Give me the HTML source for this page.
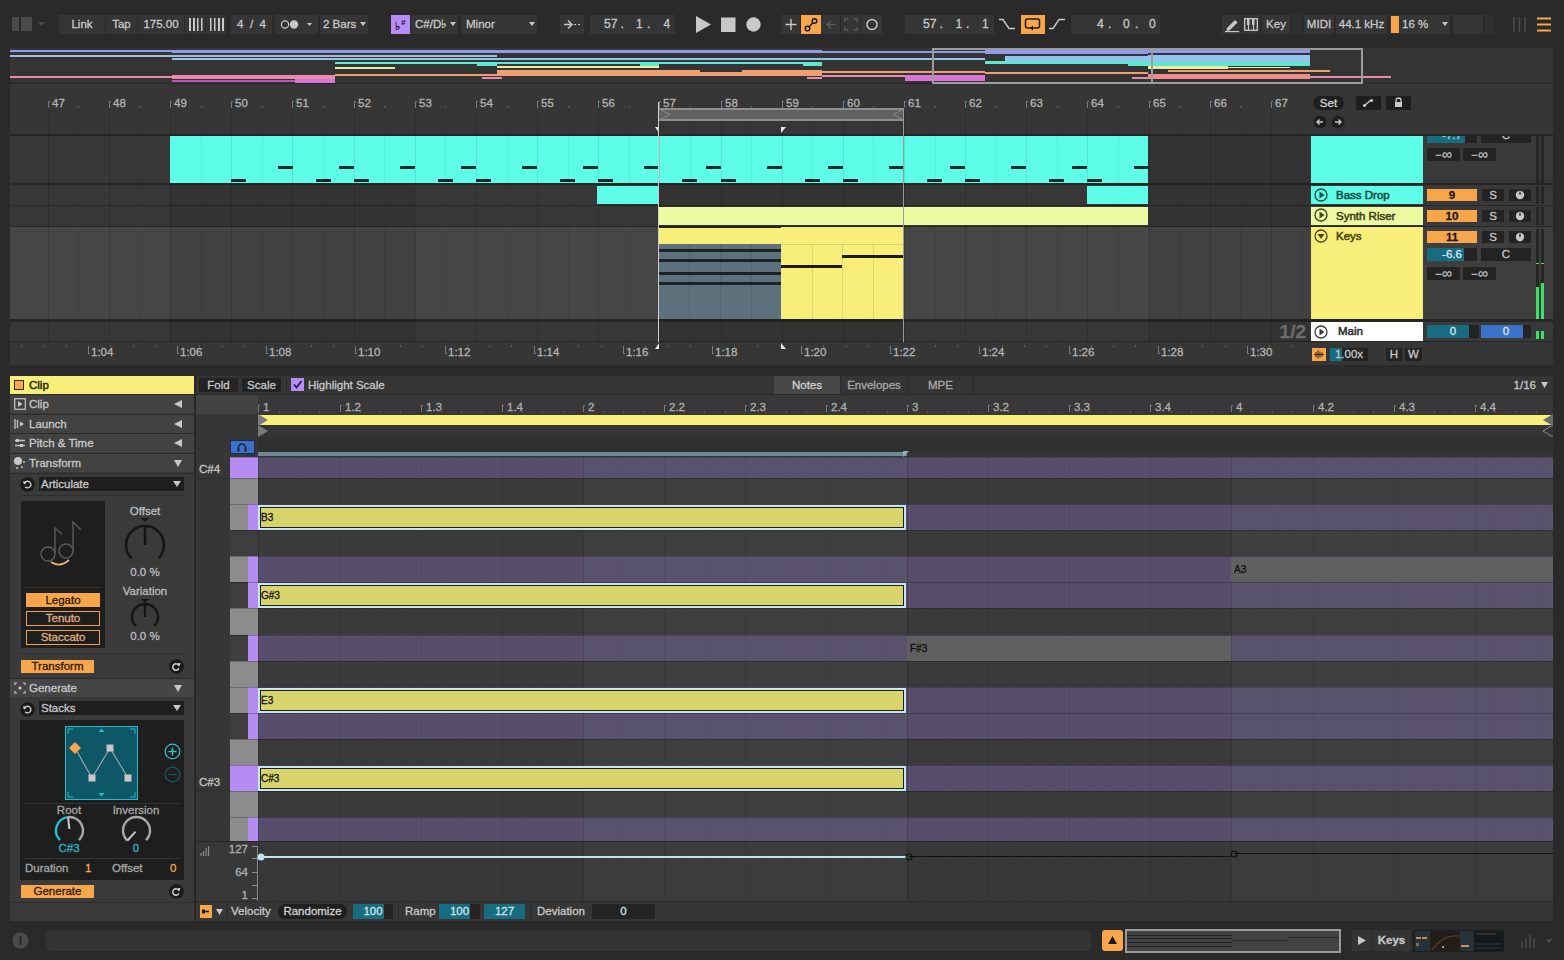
<!DOCTYPE html>
<html><head><meta charset="utf-8"><style>
html,body{margin:0;padding:0;}
body{width:1564px;height:960px;overflow:hidden;background:#2a2a2a;position:relative;font-family:"Liberation Sans",sans-serif;}
.a{position:absolute;}
.t{white-space:nowrap;overflow:visible;-webkit-text-stroke:0.3px currentColor;}
svg.a{overflow:visible;}
</style></head><body>
<svg class="a" style="left:12px;top:16px;" width="36" height="16" viewBox="0 0 36 16"><rect x="0" y="1" width="7" height="14" fill="#4a4a4a"/><rect x="9" y="1" width="11" height="14" fill="#4a4a4a"/><path d="M26 6 L33 6 L29.5 10 Z" fill="#4a4a4a"/></svg>
<div class="a" style="left:59px;top:15px;width:46px;height:19px;background:#353535;"></div>
<div class="a t" style="left:59px;top:15px;width:46px;height:19px;line-height:19px;font-size:11.5px;color:#c9c9c9;text-align:center;font-weight:normal;">Link</div>
<div class="a" style="left:106px;top:15px;width:31px;height:19px;background:#353535;"></div>
<div class="a t" style="left:106px;top:15px;width:31px;height:19px;line-height:19px;font-size:11.5px;color:#c9c9c9;text-align:center;font-weight:normal;">Tap</div>
<div class="a" style="left:138px;top:15px;width:46px;height:19px;background:#353535;"></div>
<div class="a t" style="left:138px;top:15px;width:46px;height:19px;line-height:19px;font-size:11.5px;color:#c9c9c9;text-align:center;font-weight:normal;">175.00</div>
<div class="a" style="left:185px;top:15px;width:20px;height:19px;background:#353535;"></div>
<svg class="a" style="left:188px;top:18px;" width="16" height="13" viewBox="0 0 16 13"><rect x="1" y="0" width="2" height="13" fill="#c8c8c8"/><rect x="5" y="0" width="2" height="13" fill="#c8c8c8"/><rect x="9" y="0" width="1.5" height="13" fill="#c8c8c8"/><rect x="13" y="0" width="1.5" height="13" fill="#c8c8c8"/></svg>
<div class="a" style="left:206px;top:15px;width:20px;height:19px;background:#353535;"></div>
<svg class="a" style="left:209px;top:18px;" width="16" height="13" viewBox="0 0 16 13"><rect x="1" y="0" width="1.5" height="13" fill="#c8c8c8"/><rect x="5" y="0" width="1.5" height="13" fill="#c8c8c8"/><rect x="9" y="0" width="2" height="13" fill="#c8c8c8"/><rect x="13" y="0" width="2" height="13" fill="#c8c8c8"/></svg>
<div class="a" style="left:231px;top:15px;width:41px;height:19px;background:#353535;"></div>
<div class="a t" style="left:231px;top:15px;width:41px;height:19px;line-height:19px;font-size:11.5px;color:#c9c9c9;text-align:center;font-weight:normal;">4&nbsp;&nbsp;/&nbsp;&nbsp;4</div>
<div class="a" style="left:275px;top:15px;width:43px;height:19px;background:#353535;"></div>
<svg class="a" style="left:279px;top:18px;" width="36" height="13" viewBox="0 0 36 13"><circle cx="6" cy="6.5" r="3.6" fill="none" stroke="#c8c8c8" stroke-width="1.2"/><circle cx="15" cy="6.5" r="4.2" fill="#c8c8c8"/><path d="M28 5 L33 5 L30.5 8 Z" fill="#c8c8c8"/></svg>
<div class="a" style="left:320px;top:15px;width:48px;height:19px;background:#353535;"></div>
<div class="a t" style="left:323px;top:15px;width:50px;height:19px;line-height:19px;font-size:11.5px;color:#c9c9c9;text-align:left;font-weight:normal;">2 Bars</div>
<svg class="a" style="left:359px;top:21px;" width="8" height="6" viewBox="0 0 8 6"><path d="M1 1 L7 1 L4 5 Z" fill="#c8c8c8"/></svg>
<div class="a" style="left:391px;top:15px;width:19px;height:19px;background:#b68cf5;"></div>
<svg class="a" style="left:391px;top:15px;" width="19" height="19" viewBox="0 0 19 19"><text x="4" y="15" font-family="Liberation Sans" font-size="11" font-weight="bold" fill="#1e1030">&#9837;</text><text x="10" y="10" font-family="Liberation Sans" font-size="8" font-weight="bold" fill="#1e1030">#</text></svg>
<div class="a" style="left:411px;top:15px;width:47px;height:19px;background:#353535;"></div>
<div class="a t" style="left:415px;top:15px;width:45px;height:19px;line-height:19px;font-size:11.5px;color:#c9c9c9;text-align:left;font-weight:normal;">C#/D&#9837;</div>
<svg class="a" style="left:449px;top:21px;" width="8" height="6" viewBox="0 0 8 6"><path d="M1 1 L7 1 L4 5 Z" fill="#c8c8c8"/></svg>
<div class="a" style="left:461px;top:15px;width:76px;height:19px;background:#353535;"></div>
<div class="a t" style="left:466px;top:15px;width:50px;height:19px;line-height:19px;font-size:11.5px;color:#c9c9c9;text-align:left;font-weight:normal;">Minor</div>
<svg class="a" style="left:528px;top:21px;" width="8" height="6" viewBox="0 0 8 6"><path d="M1 1 L7 1 L4 5 Z" fill="#c8c8c8"/></svg>
<div class="a" style="left:560px;top:15px;width:24px;height:19px;background:#353535;"></div>
<svg class="a" style="left:563px;top:18px;" width="20" height="13" viewBox="0 0 20 13"><path d="M1 6.5 H9 M5 2.5 L9 6.5 L5 10.5" stroke="#c8c8c8" stroke-width="1.5" fill="none"/><path d="M11 6.5 H13 M15 6.5 H17" stroke="#c8c8c8" stroke-width="1.2"/></svg>
<div class="a" style="left:590px;top:15px;width:85px;height:19px;background:#353535;"></div>
<div class="a t" style="left:604px;top:15.84px;width:120px;height:17px;line-height:17px;font-size:12px;color:#c9c9c9;text-align:left;font-weight:normal;">57</div>
<div class="a t" style="left:620.5px;top:15.84px;width:120px;height:17px;line-height:17px;font-size:12px;color:#c9c9c9;text-align:left;font-weight:normal;">.</div>
<div class="a t" style="left:636px;top:15.84px;width:120px;height:17px;line-height:17px;font-size:12px;color:#c9c9c9;text-align:left;font-weight:normal;">1</div>
<div class="a t" style="left:647px;top:15.84px;width:120px;height:17px;line-height:17px;font-size:12px;color:#c9c9c9;text-align:left;font-weight:normal;">.</div>
<div class="a t" style="left:663.5px;top:15.84px;width:120px;height:17px;line-height:17px;font-size:12px;color:#c9c9c9;text-align:left;font-weight:normal;">4</div>
<svg class="a" style="left:695px;top:15px;" width="70" height="19" viewBox="0 0 70 19"><path d="M1 1 L16 9.5 L1 18 Z" fill="#c8c8c8"/><rect x="26" y="2.5" width="14.5" height="14.5" fill="#c8c8c8"/><circle cx="58.5" cy="9.5" r="7.2" fill="#c8c8c8"/></svg>
<div class="a" style="left:781px;top:15px;width:19px;height:19px;background:#353535;"></div>
<svg class="a" style="left:784px;top:18px;" width="14" height="13" viewBox="0 0 14 13"><path d="M7 1 V12 M1.5 6.5 H12.5" stroke="#c8c8c8" stroke-width="1.4"/></svg>
<div class="a" style="left:801px;top:15px;width:20px;height:19px;background:#f8a64c;"></div>
<svg class="a" style="left:804px;top:17px;" width="14" height="15" viewBox="0 0 14 15"><circle cx="3.5" cy="11.5" r="2.3" fill="none" stroke="#1b1b1b" stroke-width="1.4"/><circle cx="10.5" cy="4" r="2.3" fill="none" stroke="#1b1b1b" stroke-width="1.4"/><path d="M5 10 L9 5.5" stroke="#1b1b1b" stroke-width="1.4"/></svg>
<div class="a" style="left:821px;top:15px;width:19px;height:19px;background:#353535;"></div>
<svg class="a" style="left:824px;top:18px;" width="14" height="13" viewBox="0 0 14 13"><path d="M12 6.5 H3 M7 2.5 L3 6.5 L7 10.5" stroke="#5a5a5a" stroke-width="1.4" fill="none"/></svg>
<div class="a" style="left:841px;top:15px;width:19px;height:19px;background:#353535;"></div>
<svg class="a" style="left:844px;top:18px;" width="14" height="13" viewBox="0 0 14 13"><path d="M1 4 V1 H4 M10 1 H13 V4 M13 9 V12 H10 M4 12 H1 V9" stroke="#5a5a5a" stroke-width="1.3" fill="none"/></svg>
<div class="a" style="left:861px;top:15px;width:21px;height:19px;background:#353535;"></div>
<svg class="a" style="left:864px;top:17px;" width="16" height="15" viewBox="0 0 16 15"><circle cx="8" cy="7.5" r="5" fill="none" stroke="#c8c8c8" stroke-width="1.5"/></svg>
<div class="a" style="left:905px;top:15px;width:89px;height:19px;background:#353535;"></div>
<div class="a t" style="left:923px;top:15.84px;width:120px;height:17px;line-height:17px;font-size:12px;color:#c9c9c9;text-align:left;font-weight:normal;">57</div>
<div class="a t" style="left:939.5px;top:15.84px;width:120px;height:17px;line-height:17px;font-size:12px;color:#c9c9c9;text-align:left;font-weight:normal;">.</div>
<div class="a t" style="left:955.5px;top:15.84px;width:120px;height:17px;line-height:17px;font-size:12px;color:#c9c9c9;text-align:left;font-weight:normal;">1</div>
<div class="a t" style="left:966px;top:15.84px;width:120px;height:17px;line-height:17px;font-size:12px;color:#c9c9c9;text-align:left;font-weight:normal;">.</div>
<div class="a t" style="left:982px;top:15.84px;width:120px;height:17px;line-height:17px;font-size:12px;color:#c9c9c9;text-align:left;font-weight:normal;">1</div>
<svg class="a" style="left:998px;top:18px;" width="18" height="13" viewBox="0 0 18 13"><path d="M1 1.5 H5 L11 10.5 H17" stroke="#c8c8c8" stroke-width="1.4" fill="none"/></svg>
<div class="a" style="left:1021px;top:15px;width:24px;height:19px;background:#f8a64c;"></div>
<svg class="a" style="left:1024px;top:17px;" width="18" height="15" viewBox="0 0 18 15"><path d="M7 11 H3.5 Q1.5 11 1.5 9 V4 Q1.5 2 3.5 2 H13.5 Q15.5 2 15.5 4 V9 Q15.5 11 13.5 11 H9" stroke="#1b1b1b" stroke-width="1.5" fill="none"/><path d="M9 8.5 L6 11 L9 13.5 Z" fill="#1b1b1b"/></svg>
<svg class="a" style="left:1048px;top:18px;" width="18" height="13" viewBox="0 0 18 13"><path d="M1 10.5 H5 L11 1.5 H17" stroke="#c8c8c8" stroke-width="1.4" fill="none"/></svg>
<div class="a" style="left:1071px;top:15px;width:89px;height:19px;background:#353535;"></div>
<div class="a t" style="left:1097px;top:15.84px;width:120px;height:17px;line-height:17px;font-size:12px;color:#c9c9c9;text-align:left;font-weight:normal;">4</div>
<div class="a t" style="left:1108px;top:15.84px;width:120px;height:17px;line-height:17px;font-size:12px;color:#c9c9c9;text-align:left;font-weight:normal;">.</div>
<div class="a t" style="left:1123px;top:15.84px;width:120px;height:17px;line-height:17px;font-size:12px;color:#c9c9c9;text-align:left;font-weight:normal;">0</div>
<div class="a t" style="left:1135px;top:15.84px;width:120px;height:17px;line-height:17px;font-size:12px;color:#c9c9c9;text-align:left;font-weight:normal;">.</div>
<div class="a t" style="left:1149px;top:15.84px;width:120px;height:17px;line-height:17px;font-size:12px;color:#c9c9c9;text-align:left;font-weight:normal;">0</div>
<div class="a" style="left:1222px;top:15px;width:19px;height:19px;background:#353535;"></div>
<svg class="a" style="left:1224px;top:18px;" width="16" height="14" viewBox="0 0 16 14"><path d="M3 10 L11 2 L13.5 4.5 L5.5 12.5 L2.5 13 Z" fill="#c8c8c8"/><rect x="1" y="13" width="14" height="1.2" fill="#c8c8c8"/></svg>
<div class="a" style="left:1242px;top:15px;width:18px;height:19px;background:#353535;"></div>
<svg class="a" style="left:1244px;top:18px;" width="14" height="13" viewBox="0 0 14 13"><rect x="0.7" y="0.7" width="12.6" height="11.6" fill="none" stroke="#c8c8c8" stroke-width="1.3"/><path d="M4.5 1 V12 M9.5 1 V12" stroke="#c8c8c8" stroke-width="1.2"/><rect x="3" y="1" width="2.5" height="6" fill="#c8c8c8"/><rect x="8" y="1" width="2.5" height="6" fill="#c8c8c8"/></svg>
<div class="a" style="left:1262px;top:15px;width:28px;height:19px;background:#353535;"></div>
<div class="a t" style="left:1262px;top:15px;width:28px;height:19px;line-height:19px;font-size:11.5px;color:#c9c9c9;text-align:center;font-weight:normal;">Key</div>
<div class="a" style="left:1292px;top:15px;width:10px;height:19px;background:#303030;"></div>
<div class="a" style="left:1304px;top:15px;width:30px;height:19px;background:#353535;"></div>
<div class="a t" style="left:1304px;top:15px;width:30px;height:19px;line-height:19px;font-size:11.5px;color:#c9c9c9;text-align:center;font-weight:normal;">MIDI</div>
<div class="a" style="left:1336px;top:15px;width:51px;height:19px;background:#353535;"></div>
<div class="a t" style="left:1336px;top:15px;width:51px;height:19px;line-height:19px;font-size:11.5px;color:#c9c9c9;text-align:center;font-weight:normal;">44.1 kHz</div>
<div class="a" style="left:1390px;top:15px;width:60px;height:19px;background:#353535;"></div>
<div class="a" style="left:1391px;top:16px;width:8px;height:17px;background:#f8a64c;"></div>
<div class="a t" style="left:1402px;top:15px;width:30px;height:19px;line-height:19px;font-size:11.5px;color:#c9c9c9;text-align:left;font-weight:normal;">16 %</div>
<svg class="a" style="left:1441px;top:21px;" width="8" height="6" viewBox="0 0 8 6"><path d="M1 1 L7 1 L4 5 Z" fill="#c8c8c8"/></svg>
<div class="a" style="left:1453px;top:15px;width:30px;height:19px;background:#353535;"></div>
<div class="a" style="left:1485px;top:15px;width:10px;height:19px;background:#303030;"></div>
<svg class="a" style="left:1512px;top:16px;" width="16" height="17" viewBox="0 0 16 17"><path d="M2 1 V16 M7.5 1 V16 M13 1 V16" stroke="#4a4a4a" stroke-width="1.6"/></svg>
<svg class="a" style="left:1536px;top:16px;" width="16" height="17" viewBox="0 0 16 17"><path d="M1 2.5 H15 M1 8.5 H15 M1 14.5 H15" stroke="#f8a64c" stroke-width="2"/></svg>
<div class="a" style="left:10px;top:48px;width:1543px;height:36px;background:#343434;"></div>
<div class="a" style="left:10px;top:83px;width:1543px;height:1px;background:#262626;"></div>
<div class="a" style="left:10px;top:50px;width:162px;height:2px;background:#8e9ceb;"></div>
<div class="a" style="left:10px;top:55px;width:162px;height:2px;background:#a3bdd6;"></div>
<div class="a" style="left:10px;top:76px;width:162px;height:2px;background:#e98cab;"></div>
<div class="a" style="left:172px;top:50px;width:163px;height:3px;background:#8e9ceb;"></div>
<div class="a" style="left:172px;top:55px;width:163px;height:2px;background:#a3bdd6;"></div>
<div class="a" style="left:172px;top:58px;width:163px;height:2px;background:#92c4ef;"></div>
<div class="a" style="left:172px;top:75px;width:163px;height:4px;background:#e98cab;"></div>
<div class="a" style="left:172px;top:80px;width:123px;height:2px;background:#b058b8;"></div>
<div class="a" style="left:295px;top:79px;width:40px;height:4px;background:#d874d6;"></div>
<div class="a" style="left:335px;top:50px;width:162px;height:3px;background:#8e9ceb;"></div>
<div class="a" style="left:335px;top:55px;width:162px;height:2px;background:#a3bdd6;"></div>
<div class="a" style="left:335px;top:58px;width:162px;height:2px;background:#92c4ef;"></div>
<div class="a" style="left:335px;top:62px;width:162px;height:2px;background:#5ee8cf;"></div>
<div class="a" style="left:477px;top:62px;width:20px;height:4px;background:#5ee8cf;"></div>
<div class="a" style="left:335px;top:67px;width:60px;height:2px;background:#e8eba0;"></div>
<div class="a" style="left:335px;top:74px;width:162px;height:2px;background:#f0a070;"></div>
<div class="a" style="left:482px;top:77px;width:20px;height:2px;background:#e98cab;"></div>
<div class="a" style="left:497px;top:50px;width:162px;height:3px;background:#8e9ceb;"></div>
<div class="a" style="left:497px;top:58px;width:162px;height:2px;background:#92c4ef;"></div>
<div class="a" style="left:497px;top:62px;width:162px;height:2px;background:#5ee8cf;"></div>
<div class="a" style="left:640px;top:62px;width:19px;height:4px;background:#5ee8cf;"></div>
<div class="a" style="left:497px;top:66px;width:162px;height:2px;background:#e8eba0;"></div>
<div class="a" style="left:497px;top:70px;width:162px;height:6px;background:#f0a070;"></div>
<div class="a" style="left:659px;top:50px;width:163px;height:3px;background:#8e9ceb;"></div>
<div class="a" style="left:659px;top:58px;width:163px;height:2px;background:#92c4ef;"></div>
<div class="a" style="left:659px;top:62px;width:163px;height:2px;background:#5ee8cf;"></div>
<div class="a" style="left:803px;top:62px;width:19px;height:4px;background:#5ee8cf;"></div>
<div class="a" style="left:659px;top:70px;width:163px;height:6px;background:#f0a070;"></div>
<div class="a" style="left:700px;top:70px;width:42px;height:2px;background:#343434;"></div>
<div class="a" style="left:807px;top:77px;width:15px;height:2px;background:#e98cab;"></div>
<div class="a" style="left:822px;top:51px;width:163px;height:2px;background:#8e9ceb;"></div>
<div class="a" style="left:822px;top:58px;width:163px;height:2px;background:#92c4ef;"></div>
<div class="a" style="left:822px;top:71px;width:163px;height:2px;background:#f0a070;"></div>
<div class="a" style="left:822px;top:75px;width:163px;height:2px;background:#e98cab;"></div>
<div class="a" style="left:905px;top:75px;width:80px;height:6px;background:#d874d6;"></div>
<div class="a" style="left:985px;top:50px;width:163px;height:4px;background:#8e9ceb;"></div>
<div class="a" style="left:1005px;top:56px;width:143px;height:5px;background:#92c4ef;"></div>
<div class="a" style="left:985px;top:61px;width:163px;height:3px;background:#5ee8cf;"></div>
<div class="a" style="left:1128px;top:62px;width:20px;height:4px;background:#5ee8cf;"></div>
<div class="a" style="left:985px;top:72px;width:163px;height:2px;background:#f0a070;"></div>
<div class="a" style="left:1132px;top:77px;width:16px;height:2px;background:#e98cab;"></div>
<div class="a" style="left:1148px;top:50px;width:162px;height:3px;background:#8e9ceb;"></div>
<div class="a" style="left:1148px;top:55px;width:162px;height:7px;background:#92c4ef;"></div>
<div class="a" style="left:1148px;top:62px;width:162px;height:4px;background:#5ee8cf;"></div>
<div class="a" style="left:1148px;top:66px;width:80px;height:3px;background:#e8eba0;"></div>
<div class="a" style="left:1228px;top:67px;width:62px;height:1px;background:#e8eba0;"></div>
<div class="a" style="left:1168px;top:70px;width:162px;height:2px;background:#f0a070;"></div>
<div class="a" style="left:1148px;top:74px;width:162px;height:5px;background:#ee8c8c;"></div>
<div class="a" style="left:1310px;top:76px;width:81px;height:2px;background:#e98cab;"></div>
<div class="a" style="left:932px;top:48px;width:431px;height:36px;border:2px solid #9c9c9c;box-sizing:border-box;"></div>
<div class="a" style="left:1151px;top:50px;width:2px;height:32px;background:#9c9c9c;"></div>
<div class="a" style="left:10px;top:84px;width:1543px;height:50px;background:#363636;"></div>
<div class="a" style="left:10px;top:134px;width:1300px;height:2px;background:#262626;"></div>
<div class="a" style="left:10px;top:136px;width:1300px;height:47px;background:#373737;"></div>
<div class="a" style="left:10px;top:183px;width:1300px;height:2px;background:#262626;"></div>
<div class="a" style="left:10px;top:185px;width:1300px;height:20px;background:#373737;"></div>
<div class="a" style="left:10px;top:205px;width:1300px;height:1px;background:#262626;"></div>
<div class="a" style="left:10px;top:206px;width:1300px;height:20px;background:#373737;"></div>
<div class="a" style="left:10px;top:226px;width:1300px;height:1px;background:#262626;"></div>
<div class="a" style="left:10px;top:227px;width:1300px;height:92px;background:#464646;"></div>
<div class="a" style="left:10px;top:319px;width:1300px;height:3px;background:#262626;"></div>
<div class="a" style="left:10px;top:322px;width:1300px;height:19px;background:#373737;"></div>
<div class="a" style="left:10px;top:341px;width:1300px;height:1px;background:#262626;"></div>
<div class="a" style="left:10px;top:342px;width:1300px;height:23px;background:#363636;"></div>
<div class="a" style="left:170px;top:136px;width:245px;height:206px;background:rgba(0,0,0,0.07);"></div>
<div class="a" style="left:659px;top:136px;width:245px;height:206px;background:rgba(0,0,0,0.07);"></div>
<div class="a" style="left:1148px;top:136px;width:162px;height:206px;background:rgba(0,0,0,0.07);"></div>
<div class="a" style="left:48px;top:108px;width:1px;height:234px;background:rgba(0,0,0,0.13);"></div>
<div class="a" style="left:78px;top:108px;width:1px;height:234px;background:rgba(0,0,0,0.07);"></div>
<div class="a" style="left:109px;top:108px;width:1px;height:234px;background:rgba(0,0,0,0.13);"></div>
<div class="a" style="left:140px;top:108px;width:1px;height:234px;background:rgba(0,0,0,0.07);"></div>
<div class="a" style="left:170px;top:108px;width:1px;height:234px;background:rgba(0,0,0,0.13);"></div>
<div class="a" style="left:201px;top:108px;width:1px;height:234px;background:rgba(0,0,0,0.07);"></div>
<div class="a" style="left:231px;top:108px;width:1px;height:234px;background:rgba(0,0,0,0.13);"></div>
<div class="a" style="left:262px;top:108px;width:1px;height:234px;background:rgba(0,0,0,0.07);"></div>
<div class="a" style="left:292px;top:108px;width:1px;height:234px;background:rgba(0,0,0,0.13);"></div>
<div class="a" style="left:323px;top:108px;width:1px;height:234px;background:rgba(0,0,0,0.07);"></div>
<div class="a" style="left:354px;top:108px;width:1px;height:234px;background:rgba(0,0,0,0.13);"></div>
<div class="a" style="left:384px;top:108px;width:1px;height:234px;background:rgba(0,0,0,0.07);"></div>
<div class="a" style="left:415px;top:108px;width:1px;height:234px;background:rgba(0,0,0,0.13);"></div>
<div class="a" style="left:445px;top:108px;width:1px;height:234px;background:rgba(0,0,0,0.07);"></div>
<div class="a" style="left:476px;top:108px;width:1px;height:234px;background:rgba(0,0,0,0.13);"></div>
<div class="a" style="left:507px;top:108px;width:1px;height:234px;background:rgba(0,0,0,0.07);"></div>
<div class="a" style="left:537px;top:108px;width:1px;height:234px;background:rgba(0,0,0,0.13);"></div>
<div class="a" style="left:568px;top:108px;width:1px;height:234px;background:rgba(0,0,0,0.07);"></div>
<div class="a" style="left:598px;top:108px;width:1px;height:234px;background:rgba(0,0,0,0.13);"></div>
<div class="a" style="left:629px;top:108px;width:1px;height:234px;background:rgba(0,0,0,0.07);"></div>
<div class="a" style="left:659px;top:108px;width:1px;height:234px;background:rgba(0,0,0,0.13);"></div>
<div class="a" style="left:690px;top:108px;width:1px;height:234px;background:rgba(0,0,0,0.07);"></div>
<div class="a" style="left:721px;top:108px;width:1px;height:234px;background:rgba(0,0,0,0.13);"></div>
<div class="a" style="left:751px;top:108px;width:1px;height:234px;background:rgba(0,0,0,0.07);"></div>
<div class="a" style="left:782px;top:108px;width:1px;height:234px;background:rgba(0,0,0,0.13);"></div>
<div class="a" style="left:812px;top:108px;width:1px;height:234px;background:rgba(0,0,0,0.07);"></div>
<div class="a" style="left:843px;top:108px;width:1px;height:234px;background:rgba(0,0,0,0.13);"></div>
<div class="a" style="left:873px;top:108px;width:1px;height:234px;background:rgba(0,0,0,0.07);"></div>
<div class="a" style="left:904px;top:108px;width:1px;height:234px;background:rgba(0,0,0,0.13);"></div>
<div class="a" style="left:935px;top:108px;width:1px;height:234px;background:rgba(0,0,0,0.07);"></div>
<div class="a" style="left:965px;top:108px;width:1px;height:234px;background:rgba(0,0,0,0.13);"></div>
<div class="a" style="left:996px;top:108px;width:1px;height:234px;background:rgba(0,0,0,0.07);"></div>
<div class="a" style="left:1026px;top:108px;width:1px;height:234px;background:rgba(0,0,0,0.13);"></div>
<div class="a" style="left:1057px;top:108px;width:1px;height:234px;background:rgba(0,0,0,0.07);"></div>
<div class="a" style="left:1087px;top:108px;width:1px;height:234px;background:rgba(0,0,0,0.13);"></div>
<div class="a" style="left:1118px;top:108px;width:1px;height:234px;background:rgba(0,0,0,0.07);"></div>
<div class="a" style="left:1149px;top:108px;width:1px;height:234px;background:rgba(0,0,0,0.13);"></div>
<div class="a" style="left:1179px;top:108px;width:1px;height:234px;background:rgba(0,0,0,0.07);"></div>
<div class="a" style="left:1210px;top:108px;width:1px;height:234px;background:rgba(0,0,0,0.13);"></div>
<div class="a" style="left:1240px;top:108px;width:1px;height:234px;background:rgba(0,0,0,0.07);"></div>
<div class="a" style="left:1271px;top:108px;width:1px;height:234px;background:rgba(0,0,0,0.13);"></div>
<div class="a" style="left:1302px;top:108px;width:1px;height:234px;background:rgba(0,0,0,0.07);"></div>
<div class="a" style="left:48px;top:101px;width:1px;height:7px;background:#7a7a7a;"></div>
<div class="a" style="left:48px;top:101px;width:2px;height:1px;background:#7a7a7a;"></div>
<div class="a t" style="left:52px;top:94.52px;width:120px;height:16px;line-height:16px;font-size:11.5px;color:#b4b4b4;text-align:left;font-weight:normal;">47</div>
<div class="a" style="left:78px;top:106px;width:1px;height:2px;background:#5a5a5a;"></div>
<div class="a" style="left:109px;top:101px;width:1px;height:7px;background:#7a7a7a;"></div>
<div class="a" style="left:109px;top:101px;width:2px;height:1px;background:#7a7a7a;"></div>
<div class="a t" style="left:113px;top:94.52px;width:120px;height:16px;line-height:16px;font-size:11.5px;color:#b4b4b4;text-align:left;font-weight:normal;">48</div>
<div class="a" style="left:140px;top:106px;width:1px;height:2px;background:#5a5a5a;"></div>
<div class="a" style="left:170px;top:101px;width:1px;height:7px;background:#7a7a7a;"></div>
<div class="a" style="left:170px;top:101px;width:2px;height:1px;background:#7a7a7a;"></div>
<div class="a t" style="left:174px;top:94.52px;width:120px;height:16px;line-height:16px;font-size:11.5px;color:#b4b4b4;text-align:left;font-weight:normal;">49</div>
<div class="a" style="left:201px;top:106px;width:1px;height:2px;background:#5a5a5a;"></div>
<div class="a" style="left:231px;top:101px;width:1px;height:7px;background:#7a7a7a;"></div>
<div class="a" style="left:231px;top:101px;width:2px;height:1px;background:#7a7a7a;"></div>
<div class="a t" style="left:235px;top:94.52px;width:120px;height:16px;line-height:16px;font-size:11.5px;color:#b4b4b4;text-align:left;font-weight:normal;">50</div>
<div class="a" style="left:262px;top:106px;width:1px;height:2px;background:#5a5a5a;"></div>
<div class="a" style="left:292px;top:101px;width:1px;height:7px;background:#7a7a7a;"></div>
<div class="a" style="left:292px;top:101px;width:2px;height:1px;background:#7a7a7a;"></div>
<div class="a t" style="left:296px;top:94.52px;width:120px;height:16px;line-height:16px;font-size:11.5px;color:#b4b4b4;text-align:left;font-weight:normal;">51</div>
<div class="a" style="left:323px;top:106px;width:1px;height:2px;background:#5a5a5a;"></div>
<div class="a" style="left:354px;top:101px;width:1px;height:7px;background:#7a7a7a;"></div>
<div class="a" style="left:354px;top:101px;width:2px;height:1px;background:#7a7a7a;"></div>
<div class="a t" style="left:358px;top:94.52px;width:120px;height:16px;line-height:16px;font-size:11.5px;color:#b4b4b4;text-align:left;font-weight:normal;">52</div>
<div class="a" style="left:384px;top:106px;width:1px;height:2px;background:#5a5a5a;"></div>
<div class="a" style="left:415px;top:101px;width:1px;height:7px;background:#7a7a7a;"></div>
<div class="a" style="left:415px;top:101px;width:2px;height:1px;background:#7a7a7a;"></div>
<div class="a t" style="left:419px;top:94.52px;width:120px;height:16px;line-height:16px;font-size:11.5px;color:#b4b4b4;text-align:left;font-weight:normal;">53</div>
<div class="a" style="left:445px;top:106px;width:1px;height:2px;background:#5a5a5a;"></div>
<div class="a" style="left:476px;top:101px;width:1px;height:7px;background:#7a7a7a;"></div>
<div class="a" style="left:476px;top:101px;width:2px;height:1px;background:#7a7a7a;"></div>
<div class="a t" style="left:480px;top:94.52px;width:120px;height:16px;line-height:16px;font-size:11.5px;color:#b4b4b4;text-align:left;font-weight:normal;">54</div>
<div class="a" style="left:507px;top:106px;width:1px;height:2px;background:#5a5a5a;"></div>
<div class="a" style="left:537px;top:101px;width:1px;height:7px;background:#7a7a7a;"></div>
<div class="a" style="left:537px;top:101px;width:2px;height:1px;background:#7a7a7a;"></div>
<div class="a t" style="left:541px;top:94.52px;width:120px;height:16px;line-height:16px;font-size:11.5px;color:#b4b4b4;text-align:left;font-weight:normal;">55</div>
<div class="a" style="left:568px;top:106px;width:1px;height:2px;background:#5a5a5a;"></div>
<div class="a" style="left:598px;top:101px;width:1px;height:7px;background:#7a7a7a;"></div>
<div class="a" style="left:598px;top:101px;width:2px;height:1px;background:#7a7a7a;"></div>
<div class="a t" style="left:602px;top:94.52px;width:120px;height:16px;line-height:16px;font-size:11.5px;color:#b4b4b4;text-align:left;font-weight:normal;">56</div>
<div class="a" style="left:629px;top:106px;width:1px;height:2px;background:#5a5a5a;"></div>
<div class="a" style="left:659px;top:101px;width:1px;height:7px;background:#7a7a7a;"></div>
<div class="a" style="left:659px;top:101px;width:2px;height:1px;background:#7a7a7a;"></div>
<div class="a t" style="left:663px;top:94.52px;width:120px;height:16px;line-height:16px;font-size:11.5px;color:#b4b4b4;text-align:left;font-weight:normal;">57</div>
<div class="a" style="left:690px;top:106px;width:1px;height:2px;background:#5a5a5a;"></div>
<div class="a" style="left:721px;top:101px;width:1px;height:7px;background:#7a7a7a;"></div>
<div class="a" style="left:721px;top:101px;width:2px;height:1px;background:#7a7a7a;"></div>
<div class="a t" style="left:725px;top:94.52px;width:120px;height:16px;line-height:16px;font-size:11.5px;color:#b4b4b4;text-align:left;font-weight:normal;">58</div>
<div class="a" style="left:751px;top:106px;width:1px;height:2px;background:#5a5a5a;"></div>
<div class="a" style="left:782px;top:101px;width:1px;height:7px;background:#7a7a7a;"></div>
<div class="a" style="left:782px;top:101px;width:2px;height:1px;background:#7a7a7a;"></div>
<div class="a t" style="left:786px;top:94.52px;width:120px;height:16px;line-height:16px;font-size:11.5px;color:#b4b4b4;text-align:left;font-weight:normal;">59</div>
<div class="a" style="left:812px;top:106px;width:1px;height:2px;background:#5a5a5a;"></div>
<div class="a" style="left:843px;top:101px;width:1px;height:7px;background:#7a7a7a;"></div>
<div class="a" style="left:843px;top:101px;width:2px;height:1px;background:#7a7a7a;"></div>
<div class="a t" style="left:847px;top:94.52px;width:120px;height:16px;line-height:16px;font-size:11.5px;color:#b4b4b4;text-align:left;font-weight:normal;">60</div>
<div class="a" style="left:873px;top:106px;width:1px;height:2px;background:#5a5a5a;"></div>
<div class="a" style="left:904px;top:101px;width:1px;height:7px;background:#7a7a7a;"></div>
<div class="a" style="left:904px;top:101px;width:2px;height:1px;background:#7a7a7a;"></div>
<div class="a t" style="left:908px;top:94.52px;width:120px;height:16px;line-height:16px;font-size:11.5px;color:#b4b4b4;text-align:left;font-weight:normal;">61</div>
<div class="a" style="left:935px;top:106px;width:1px;height:2px;background:#5a5a5a;"></div>
<div class="a" style="left:965px;top:101px;width:1px;height:7px;background:#7a7a7a;"></div>
<div class="a" style="left:965px;top:101px;width:2px;height:1px;background:#7a7a7a;"></div>
<div class="a t" style="left:969px;top:94.52px;width:120px;height:16px;line-height:16px;font-size:11.5px;color:#b4b4b4;text-align:left;font-weight:normal;">62</div>
<div class="a" style="left:996px;top:106px;width:1px;height:2px;background:#5a5a5a;"></div>
<div class="a" style="left:1026px;top:101px;width:1px;height:7px;background:#7a7a7a;"></div>
<div class="a" style="left:1026px;top:101px;width:2px;height:1px;background:#7a7a7a;"></div>
<div class="a t" style="left:1030px;top:94.52px;width:120px;height:16px;line-height:16px;font-size:11.5px;color:#b4b4b4;text-align:left;font-weight:normal;">63</div>
<div class="a" style="left:1057px;top:106px;width:1px;height:2px;background:#5a5a5a;"></div>
<div class="a" style="left:1087px;top:101px;width:1px;height:7px;background:#7a7a7a;"></div>
<div class="a" style="left:1087px;top:101px;width:2px;height:1px;background:#7a7a7a;"></div>
<div class="a t" style="left:1091px;top:94.52px;width:120px;height:16px;line-height:16px;font-size:11.5px;color:#b4b4b4;text-align:left;font-weight:normal;">64</div>
<div class="a" style="left:1118px;top:106px;width:1px;height:2px;background:#5a5a5a;"></div>
<div class="a" style="left:1149px;top:101px;width:1px;height:7px;background:#7a7a7a;"></div>
<div class="a" style="left:1149px;top:101px;width:2px;height:1px;background:#7a7a7a;"></div>
<div class="a t" style="left:1153px;top:94.52px;width:120px;height:16px;line-height:16px;font-size:11.5px;color:#b4b4b4;text-align:left;font-weight:normal;">65</div>
<div class="a" style="left:1179px;top:106px;width:1px;height:2px;background:#5a5a5a;"></div>
<div class="a" style="left:1210px;top:101px;width:1px;height:7px;background:#7a7a7a;"></div>
<div class="a" style="left:1210px;top:101px;width:2px;height:1px;background:#7a7a7a;"></div>
<div class="a t" style="left:1214px;top:94.52px;width:120px;height:16px;line-height:16px;font-size:11.5px;color:#b4b4b4;text-align:left;font-weight:normal;">66</div>
<div class="a" style="left:1240px;top:106px;width:1px;height:2px;background:#5a5a5a;"></div>
<div class="a" style="left:1271px;top:101px;width:1px;height:7px;background:#7a7a7a;"></div>
<div class="a" style="left:1271px;top:101px;width:2px;height:1px;background:#7a7a7a;"></div>
<div class="a t" style="left:1275px;top:94.52px;width:120px;height:16px;line-height:16px;font-size:11.5px;color:#b4b4b4;text-align:left;font-weight:normal;">67</div>
<div class="a" style="left:659px;top:108px;width:244px;height:13px;background:#616161;border-top:2px solid #8e8e8e;border-bottom:2px solid #8e8e8e;box-sizing:border-box;"></div>
<svg class="a" style="left:660px;top:109px;" width="14" height="11" viewBox="0 0 14 11"><path d="M1 1 L10 5.5 L1 10" stroke="#8c8c8c" stroke-width="1" fill="none"/></svg>
<svg class="a" style="left:889px;top:109px;" width="14" height="11" viewBox="0 0 14 11"><path d="M13 1 L4 5.5 L13 10" stroke="#8c8c8c" stroke-width="1" fill="none"/></svg>
<div class="a" style="left:170px;top:136px;width:978px;height:47px;background:#5efde8;"></div>
<div class="a" style="left:201px;top:136px;width:1px;height:47px;background:rgba(0,60,60,0.07);"></div>
<div class="a" style="left:231px;top:136px;width:1px;height:47px;background:rgba(0,60,60,0.12);"></div>
<div class="a" style="left:262px;top:136px;width:1px;height:47px;background:rgba(0,60,60,0.07);"></div>
<div class="a" style="left:292px;top:136px;width:1px;height:47px;background:rgba(0,60,60,0.12);"></div>
<div class="a" style="left:323px;top:136px;width:1px;height:47px;background:rgba(0,60,60,0.07);"></div>
<div class="a" style="left:354px;top:136px;width:1px;height:47px;background:rgba(0,60,60,0.12);"></div>
<div class="a" style="left:384px;top:136px;width:1px;height:47px;background:rgba(0,60,60,0.07);"></div>
<div class="a" style="left:415px;top:136px;width:1px;height:47px;background:rgba(0,60,60,0.12);"></div>
<div class="a" style="left:445px;top:136px;width:1px;height:47px;background:rgba(0,60,60,0.07);"></div>
<div class="a" style="left:476px;top:136px;width:1px;height:47px;background:rgba(0,60,60,0.12);"></div>
<div class="a" style="left:507px;top:136px;width:1px;height:47px;background:rgba(0,60,60,0.07);"></div>
<div class="a" style="left:537px;top:136px;width:1px;height:47px;background:rgba(0,60,60,0.12);"></div>
<div class="a" style="left:568px;top:136px;width:1px;height:47px;background:rgba(0,60,60,0.07);"></div>
<div class="a" style="left:598px;top:136px;width:1px;height:47px;background:rgba(0,60,60,0.12);"></div>
<div class="a" style="left:629px;top:136px;width:1px;height:47px;background:rgba(0,60,60,0.07);"></div>
<div class="a" style="left:659px;top:136px;width:1px;height:47px;background:rgba(0,60,60,0.12);"></div>
<div class="a" style="left:690px;top:136px;width:1px;height:47px;background:rgba(0,60,60,0.07);"></div>
<div class="a" style="left:721px;top:136px;width:1px;height:47px;background:rgba(0,60,60,0.12);"></div>
<div class="a" style="left:751px;top:136px;width:1px;height:47px;background:rgba(0,60,60,0.07);"></div>
<div class="a" style="left:782px;top:136px;width:1px;height:47px;background:rgba(0,60,60,0.12);"></div>
<div class="a" style="left:812px;top:136px;width:1px;height:47px;background:rgba(0,60,60,0.07);"></div>
<div class="a" style="left:843px;top:136px;width:1px;height:47px;background:rgba(0,60,60,0.12);"></div>
<div class="a" style="left:873px;top:136px;width:1px;height:47px;background:rgba(0,60,60,0.07);"></div>
<div class="a" style="left:904px;top:136px;width:1px;height:47px;background:rgba(0,60,60,0.12);"></div>
<div class="a" style="left:935px;top:136px;width:1px;height:47px;background:rgba(0,60,60,0.07);"></div>
<div class="a" style="left:965px;top:136px;width:1px;height:47px;background:rgba(0,60,60,0.12);"></div>
<div class="a" style="left:996px;top:136px;width:1px;height:47px;background:rgba(0,60,60,0.07);"></div>
<div class="a" style="left:1026px;top:136px;width:1px;height:47px;background:rgba(0,60,60,0.12);"></div>
<div class="a" style="left:1057px;top:136px;width:1px;height:47px;background:rgba(0,60,60,0.07);"></div>
<div class="a" style="left:1087px;top:136px;width:1px;height:47px;background:rgba(0,60,60,0.12);"></div>
<div class="a" style="left:1118px;top:136px;width:1px;height:47px;background:rgba(0,60,60,0.07);"></div>
<div class="a" style="left:278px;top:166px;width:15px;height:3px;background:#0e2b2b;"></div>
<div class="a" style="left:231px;top:179px;width:15px;height:3px;background:#0e2b2b;"></div>
<div class="a" style="left:339px;top:166px;width:15px;height:3px;background:#0e2b2b;"></div>
<div class="a" style="left:316px;top:179px;width:15px;height:3px;background:#0e2b2b;"></div>
<div class="a" style="left:400px;top:166px;width:15px;height:3px;background:#0e2b2b;"></div>
<div class="a" style="left:354px;top:179px;width:15px;height:3px;background:#0e2b2b;"></div>
<div class="a" style="left:461px;top:166px;width:15px;height:3px;background:#0e2b2b;"></div>
<div class="a" style="left:438px;top:179px;width:15px;height:3px;background:#0e2b2b;"></div>
<div class="a" style="left:522px;top:166px;width:15px;height:3px;background:#0e2b2b;"></div>
<div class="a" style="left:476px;top:179px;width:15px;height:3px;background:#0e2b2b;"></div>
<div class="a" style="left:583px;top:166px;width:15px;height:3px;background:#0e2b2b;"></div>
<div class="a" style="left:560px;top:179px;width:15px;height:3px;background:#0e2b2b;"></div>
<div class="a" style="left:644px;top:166px;width:15px;height:3px;background:#0e2b2b;"></div>
<div class="a" style="left:598px;top:179px;width:15px;height:3px;background:#0e2b2b;"></div>
<div class="a" style="left:706px;top:166px;width:15px;height:3px;background:#0e2b2b;"></div>
<div class="a" style="left:682px;top:179px;width:15px;height:3px;background:#0e2b2b;"></div>
<div class="a" style="left:767px;top:166px;width:15px;height:3px;background:#0e2b2b;"></div>
<div class="a" style="left:721px;top:179px;width:15px;height:3px;background:#0e2b2b;"></div>
<div class="a" style="left:828px;top:166px;width:15px;height:3px;background:#0e2b2b;"></div>
<div class="a" style="left:805px;top:179px;width:15px;height:3px;background:#0e2b2b;"></div>
<div class="a" style="left:889px;top:166px;width:15px;height:3px;background:#0e2b2b;"></div>
<div class="a" style="left:843px;top:179px;width:15px;height:3px;background:#0e2b2b;"></div>
<div class="a" style="left:950px;top:166px;width:15px;height:3px;background:#0e2b2b;"></div>
<div class="a" style="left:927px;top:179px;width:15px;height:3px;background:#0e2b2b;"></div>
<div class="a" style="left:1011px;top:166px;width:15px;height:3px;background:#0e2b2b;"></div>
<div class="a" style="left:965px;top:179px;width:15px;height:3px;background:#0e2b2b;"></div>
<div class="a" style="left:1072px;top:166px;width:15px;height:3px;background:#0e2b2b;"></div>
<div class="a" style="left:1049px;top:179px;width:15px;height:3px;background:#0e2b2b;"></div>
<div class="a" style="left:1134px;top:166px;width:15px;height:3px;background:#0e2b2b;"></div>
<div class="a" style="left:1087px;top:179px;width:15px;height:3px;background:#0e2b2b;"></div>
<div class="a" style="left:597px;top:186px;width:61px;height:18px;background:#5efde8;"></div>
<div class="a" style="left:1087px;top:186px;width:61px;height:18px;background:#5efde8;"></div>
<div class="a" style="left:659px;top:207px;width:489px;height:18px;background:#eefaa2;"></div>
<div class="a" style="left:658px;top:227px;width:245px;height:17px;background:#f8ef7b;"></div>
<div class="a" style="left:658px;top:227px;width:123px;height:1px;background:#262626;"></div>
<div class="a" style="left:659px;top:244px;width:122px;height:75px;background:#5d727d;"></div>
<div class="a" style="left:781px;top:244px;width:122px;height:75px;background:#f8ef7b;"></div>
<div class="a" style="left:781px;top:244px;width:122px;height:1px;background:rgba(0,0,0,0.12);"></div>
<div class="a" style="left:689px;top:244px;width:1px;height:75px;background:rgba(0,0,0,0.10);"></div>
<div class="a" style="left:720px;top:244px;width:1px;height:75px;background:rgba(0,0,0,0.10);"></div>
<div class="a" style="left:751px;top:244px;width:1px;height:75px;background:rgba(0,0,0,0.10);"></div>
<div class="a" style="left:812px;top:244px;width:1px;height:75px;background:rgba(0,0,0,0.10);"></div>
<div class="a" style="left:842px;top:244px;width:1px;height:75px;background:rgba(0,0,0,0.10);"></div>
<div class="a" style="left:873px;top:244px;width:1px;height:75px;background:rgba(0,0,0,0.10);"></div>
<div class="a" style="left:659px;top:249px;width:122px;height:3px;background:#1c2226;"></div>
<div class="a" style="left:659px;top:259px;width:122px;height:3px;background:#1c2226;"></div>
<div class="a" style="left:659px;top:272px;width:122px;height:3px;background:#1c2226;"></div>
<div class="a" style="left:659px;top:282px;width:122px;height:3px;background:#1c2226;"></div>
<div class="a" style="left:781px;top:265px;width:61px;height:3px;background:#1c1c10;"></div>
<div class="a" style="left:842px;top:255px;width:61px;height:3px;background:#1c1c10;"></div>
<svg class="a" style="left:655px;top:127px;" width="5" height="6" viewBox="0 0 5 6"><path d="M0 0 L4 0 L4 6 Z" fill="#e8e8e8"/></svg>
<svg class="a" style="left:781px;top:127px;" width="5" height="6" viewBox="0 0 5 6"><path d="M0 0 L5 0 L0 6 Z" fill="#e8e8e8"/></svg>
<svg class="a" style="left:655px;top:343px;" width="5" height="6" viewBox="0 0 5 6"><path d="M4 0 L4 6 L0 6 Z" fill="#e8e8e8"/></svg>
<svg class="a" style="left:781px;top:343px;" width="5" height="6" viewBox="0 0 5 6"><path d="M0 0 L5 6 L0 6 Z" fill="#e8e8e8"/></svg>
<div class="a" style="left:658px;top:102px;width:1px;height:240px;background:#cfcfcf;"></div>
<div class="a" style="left:903px;top:108px;width:1px;height:234px;background:#9a9a9a;"></div>
<div class="a" style="left:88px;top:346px;width:1px;height:8px;background:#7a7a7a;"></div>
<div class="a" style="left:88px;top:353px;width:2px;height:1px;background:#7a7a7a;"></div>
<div class="a t" style="left:91px;top:343.52px;width:120px;height:16px;line-height:16px;font-size:11.5px;color:#b4b4b4;text-align:left;font-weight:normal;">1:04</div>
<div class="a" style="left:21px;top:345px;width:1px;height:2px;background:#5e5e5e;"></div>
<div class="a" style="left:43px;top:345px;width:1px;height:2px;background:#5e5e5e;"></div>
<div class="a" style="left:66px;top:345px;width:1px;height:2px;background:#5e5e5e;"></div>
<div class="a" style="left:177px;top:346px;width:1px;height:8px;background:#7a7a7a;"></div>
<div class="a" style="left:177px;top:353px;width:2px;height:1px;background:#7a7a7a;"></div>
<div class="a t" style="left:180px;top:343.52px;width:120px;height:16px;line-height:16px;font-size:11.5px;color:#b4b4b4;text-align:left;font-weight:normal;">1:06</div>
<div class="a" style="left:110px;top:345px;width:1px;height:2px;background:#5e5e5e;"></div>
<div class="a" style="left:133px;top:345px;width:1px;height:2px;background:#5e5e5e;"></div>
<div class="a" style="left:155px;top:345px;width:1px;height:2px;background:#5e5e5e;"></div>
<div class="a" style="left:266px;top:346px;width:1px;height:8px;background:#7a7a7a;"></div>
<div class="a" style="left:266px;top:353px;width:2px;height:1px;background:#7a7a7a;"></div>
<div class="a t" style="left:269px;top:343.52px;width:120px;height:16px;line-height:16px;font-size:11.5px;color:#b4b4b4;text-align:left;font-weight:normal;">1:08</div>
<div class="a" style="left:199px;top:345px;width:1px;height:2px;background:#5e5e5e;"></div>
<div class="a" style="left:222px;top:345px;width:1px;height:2px;background:#5e5e5e;"></div>
<div class="a" style="left:244px;top:345px;width:1px;height:2px;background:#5e5e5e;"></div>
<div class="a" style="left:355px;top:346px;width:1px;height:8px;background:#7a7a7a;"></div>
<div class="a" style="left:355px;top:353px;width:2px;height:1px;background:#7a7a7a;"></div>
<div class="a t" style="left:358px;top:343.52px;width:120px;height:16px;line-height:16px;font-size:11.5px;color:#b4b4b4;text-align:left;font-weight:normal;">1:10</div>
<div class="a" style="left:289px;top:345px;width:1px;height:2px;background:#5e5e5e;"></div>
<div class="a" style="left:311px;top:345px;width:1px;height:2px;background:#5e5e5e;"></div>
<div class="a" style="left:333px;top:345px;width:1px;height:2px;background:#5e5e5e;"></div>
<div class="a" style="left:445px;top:346px;width:1px;height:8px;background:#7a7a7a;"></div>
<div class="a" style="left:445px;top:353px;width:2px;height:1px;background:#7a7a7a;"></div>
<div class="a t" style="left:448px;top:343.52px;width:120px;height:16px;line-height:16px;font-size:11.5px;color:#b4b4b4;text-align:left;font-weight:normal;">1:12</div>
<div class="a" style="left:378px;top:345px;width:1px;height:2px;background:#5e5e5e;"></div>
<div class="a" style="left:400px;top:345px;width:1px;height:2px;background:#5e5e5e;"></div>
<div class="a" style="left:422px;top:345px;width:1px;height:2px;background:#5e5e5e;"></div>
<div class="a" style="left:534px;top:346px;width:1px;height:8px;background:#7a7a7a;"></div>
<div class="a" style="left:534px;top:353px;width:2px;height:1px;background:#7a7a7a;"></div>
<div class="a t" style="left:537px;top:343.52px;width:120px;height:16px;line-height:16px;font-size:11.5px;color:#b4b4b4;text-align:left;font-weight:normal;">1:14</div>
<div class="a" style="left:467px;top:345px;width:1px;height:2px;background:#5e5e5e;"></div>
<div class="a" style="left:489px;top:345px;width:1px;height:2px;background:#5e5e5e;"></div>
<div class="a" style="left:511px;top:345px;width:1px;height:2px;background:#5e5e5e;"></div>
<div class="a" style="left:623px;top:346px;width:1px;height:8px;background:#7a7a7a;"></div>
<div class="a" style="left:623px;top:353px;width:2px;height:1px;background:#7a7a7a;"></div>
<div class="a t" style="left:626px;top:343.52px;width:120px;height:16px;line-height:16px;font-size:11.5px;color:#b4b4b4;text-align:left;font-weight:normal;">1:16</div>
<div class="a" style="left:556px;top:345px;width:1px;height:2px;background:#5e5e5e;"></div>
<div class="a" style="left:578px;top:345px;width:1px;height:2px;background:#5e5e5e;"></div>
<div class="a" style="left:601px;top:345px;width:1px;height:2px;background:#5e5e5e;"></div>
<div class="a" style="left:712px;top:346px;width:1px;height:8px;background:#7a7a7a;"></div>
<div class="a" style="left:712px;top:353px;width:2px;height:1px;background:#7a7a7a;"></div>
<div class="a t" style="left:715px;top:343.52px;width:120px;height:16px;line-height:16px;font-size:11.5px;color:#b4b4b4;text-align:left;font-weight:normal;">1:18</div>
<div class="a" style="left:645px;top:345px;width:1px;height:2px;background:#5e5e5e;"></div>
<div class="a" style="left:667px;top:345px;width:1px;height:2px;background:#5e5e5e;"></div>
<div class="a" style="left:690px;top:345px;width:1px;height:2px;background:#5e5e5e;"></div>
<div class="a" style="left:801px;top:346px;width:1px;height:8px;background:#7a7a7a;"></div>
<div class="a" style="left:801px;top:353px;width:2px;height:1px;background:#7a7a7a;"></div>
<div class="a t" style="left:804px;top:343.52px;width:120px;height:16px;line-height:16px;font-size:11.5px;color:#b4b4b4;text-align:left;font-weight:normal;">1:20</div>
<div class="a" style="left:734px;top:345px;width:1px;height:2px;background:#5e5e5e;"></div>
<div class="a" style="left:757px;top:345px;width:1px;height:2px;background:#5e5e5e;"></div>
<div class="a" style="left:779px;top:345px;width:1px;height:2px;background:#5e5e5e;"></div>
<div class="a" style="left:890px;top:346px;width:1px;height:8px;background:#7a7a7a;"></div>
<div class="a" style="left:890px;top:353px;width:2px;height:1px;background:#7a7a7a;"></div>
<div class="a t" style="left:893px;top:343.52px;width:120px;height:16px;line-height:16px;font-size:11.5px;color:#b4b4b4;text-align:left;font-weight:normal;">1:22</div>
<div class="a" style="left:823px;top:345px;width:1px;height:2px;background:#5e5e5e;"></div>
<div class="a" style="left:846px;top:345px;width:1px;height:2px;background:#5e5e5e;"></div>
<div class="a" style="left:868px;top:345px;width:1px;height:2px;background:#5e5e5e;"></div>
<div class="a" style="left:979px;top:346px;width:1px;height:8px;background:#7a7a7a;"></div>
<div class="a" style="left:979px;top:353px;width:2px;height:1px;background:#7a7a7a;"></div>
<div class="a t" style="left:982px;top:343.52px;width:120px;height:16px;line-height:16px;font-size:11.5px;color:#b4b4b4;text-align:left;font-weight:normal;">1:24</div>
<div class="a" style="left:913px;top:345px;width:1px;height:2px;background:#5e5e5e;"></div>
<div class="a" style="left:935px;top:345px;width:1px;height:2px;background:#5e5e5e;"></div>
<div class="a" style="left:957px;top:345px;width:1px;height:2px;background:#5e5e5e;"></div>
<div class="a" style="left:1069px;top:346px;width:1px;height:8px;background:#7a7a7a;"></div>
<div class="a" style="left:1069px;top:353px;width:2px;height:1px;background:#7a7a7a;"></div>
<div class="a t" style="left:1072px;top:343.52px;width:120px;height:16px;line-height:16px;font-size:11.5px;color:#b4b4b4;text-align:left;font-weight:normal;">1:26</div>
<div class="a" style="left:1002px;top:345px;width:1px;height:2px;background:#5e5e5e;"></div>
<div class="a" style="left:1024px;top:345px;width:1px;height:2px;background:#5e5e5e;"></div>
<div class="a" style="left:1046px;top:345px;width:1px;height:2px;background:#5e5e5e;"></div>
<div class="a" style="left:1158px;top:346px;width:1px;height:8px;background:#7a7a7a;"></div>
<div class="a" style="left:1158px;top:353px;width:2px;height:1px;background:#7a7a7a;"></div>
<div class="a t" style="left:1161px;top:343.52px;width:120px;height:16px;line-height:16px;font-size:11.5px;color:#b4b4b4;text-align:left;font-weight:normal;">1:28</div>
<div class="a" style="left:1091px;top:345px;width:1px;height:2px;background:#5e5e5e;"></div>
<div class="a" style="left:1113px;top:345px;width:1px;height:2px;background:#5e5e5e;"></div>
<div class="a" style="left:1135px;top:345px;width:1px;height:2px;background:#5e5e5e;"></div>
<div class="a" style="left:1247px;top:346px;width:1px;height:8px;background:#7a7a7a;"></div>
<div class="a" style="left:1247px;top:353px;width:2px;height:1px;background:#7a7a7a;"></div>
<div class="a t" style="left:1250px;top:343.52px;width:120px;height:16px;line-height:16px;font-size:11.5px;color:#b4b4b4;text-align:left;font-weight:normal;">1:30</div>
<div class="a" style="left:1180px;top:345px;width:1px;height:2px;background:#5e5e5e;"></div>
<div class="a" style="left:1202px;top:345px;width:1px;height:2px;background:#5e5e5e;"></div>
<div class="a" style="left:1225px;top:345px;width:1px;height:2px;background:#5e5e5e;"></div>
<div class="a" style="left:1269px;top:345px;width:1px;height:2px;background:#5e5e5e;"></div>
<div class="a" style="left:1291px;top:345px;width:1px;height:2px;background:#5e5e5e;"></div>
<div class="a" style="left:1314px;top:345px;width:1px;height:2px;background:#5e5e5e;"></div>
<div class="a" style="left:1310px;top:84px;width:243px;height:50px;background:#363636;"></div>
<div class="a" style="left:1313px;top:96px;width:31px;height:14px;background:#1e1e1e;border-radius:7px;"></div>
<div class="a t" style="left:1313px;top:96px;width:31px;height:14px;line-height:14px;font-size:11.5px;color:#d0d0d0;text-align:center;font-weight:normal;">Set</div>
<div class="a" style="left:1356px;top:96px;width:25px;height:14px;background:#1e1e1e;"></div>
<svg class="a" style="left:1362px;top:98px;" width="12" height="10" viewBox="0 0 12 10"><path d="M2 8 L9 2" stroke="#c8c8c8" stroke-width="1.5"/><circle cx="2.5" cy="7.5" r="1.6" fill="#c8c8c8"/><circle cx="9.5" cy="2.5" r="1.6" fill="#c8c8c8"/></svg>
<div class="a" style="left:1386px;top:96px;width:25px;height:14px;background:#1e1e1e;"></div>
<svg class="a" style="left:1393px;top:97px;" width="11" height="11" viewBox="0 0 11 11"><path d="M3 5 V3.5 A2.5 2.5 0 0 1 8 3.5 V5" stroke="#c8c8c8" stroke-width="1.3" fill="none"/><rect x="2" y="5" width="7" height="5" fill="#c8c8c8"/></svg>
<svg class="a" style="left:1313px;top:115px;" width="32" height="14" viewBox="0 0 32 14"><circle cx="7" cy="7" r="6.5" fill="#1e1e1e"/><circle cx="25" cy="7" r="6.5" fill="#1e1e1e"/><path d="M10 7 H4 M6.5 4.5 L4 7 L6.5 9.5" stroke="#c8c8c8" stroke-width="1.4" fill="none"/><path d="M22 7 H28 M25.5 4.5 L28 7 L25.5 9.5" stroke="#c8c8c8" stroke-width="1.4" fill="none"/></svg>
<div class="a" style="left:1310px;top:134px;width:243px;height:2px;background:#262626;"></div>
<div class="a" style="left:1310px;top:136px;width:243px;height:47px;background:#393939;"></div>
<div class="a" style="left:1310px;top:183px;width:243px;height:2px;background:#262626;"></div>
<div class="a" style="left:1310px;top:185px;width:243px;height:20px;background:#393939;"></div>
<div class="a" style="left:1310px;top:205px;width:243px;height:1px;background:#262626;"></div>
<div class="a" style="left:1310px;top:206px;width:243px;height:20px;background:#393939;"></div>
<div class="a" style="left:1310px;top:226px;width:243px;height:1px;background:#262626;"></div>
<div class="a" style="left:1310px;top:227px;width:243px;height:92px;background:#3e3e3e;"></div>
<div class="a" style="left:1310px;top:319px;width:243px;height:3px;background:#262626;"></div>
<div class="a" style="left:1310px;top:322px;width:243px;height:19px;background:#393939;"></div>
<div class="a" style="left:1310px;top:341px;width:243px;height:1px;background:#262626;"></div>
<div class="a" style="left:1310px;top:342px;width:243px;height:23px;background:#363636;"></div>
<div class="a" style="left:1311px;top:136px;width:112px;height:47px;background:#5efde8;"></div>
<div class="a" style="left:1311px;top:186px;width:112px;height:18px;background:#5efde8;"></div>
<div class="a" style="left:1311px;top:207px;width:112px;height:18px;background:#eefaa2;"></div>
<div class="a" style="left:1311px;top:227px;width:112px;height:92px;background:#f8ef7b;"></div>
<div class="a" style="left:1311px;top:322px;width:112px;height:19px;background:#ffffff;"></div>
<svg class="a" style="left:1314px;top:188px;" width="14" height="14" viewBox="0 0 14 14"><circle cx="7" cy="7" r="6" fill="none" stroke="#1a4a44" stroke-width="1.3"/><path d="M5.5 3.5 L10.5 7 L5.5 10.5 Z" fill="#1a4a44"/></svg>
<div class="a t" style="left:1336px;top:186px;width:80px;height:18px;line-height:18px;font-size:11.5px;color:#1a4a44;text-align:left;font-weight:normal;-webkit-text-stroke:0.55px currentColor;">Bass Drop</div>
<svg class="a" style="left:1314px;top:208px;" width="14" height="14" viewBox="0 0 14 14"><circle cx="7" cy="7" r="6" fill="none" stroke="#3f4220" stroke-width="1.3"/><path d="M5.5 3.5 L10.5 7 L5.5 10.5 Z" fill="#3f4220"/></svg>
<div class="a t" style="left:1336px;top:207px;width:80px;height:18px;line-height:18px;font-size:11.5px;color:#3f4220;text-align:left;font-weight:normal;-webkit-text-stroke:0.55px currentColor;">Synth Riser</div>
<svg class="a" style="left:1314px;top:229px;" width="14" height="14" viewBox="0 0 14 14"><circle cx="7" cy="7" r="6" fill="none" stroke="#4a4518" stroke-width="1.3"/><path d="M3.5 5 L10.5 5 L7 10 Z" fill="#4a4518"/></svg>
<div class="a t" style="left:1336px;top:228px;width:80px;height:17px;line-height:17px;font-size:11.5px;color:#4a4518;text-align:left;font-weight:normal;-webkit-text-stroke:0.55px currentColor;">Keys</div>
<svg class="a" style="left:1314px;top:325px;" width="14" height="14" viewBox="0 0 14 14"><circle cx="7" cy="7" r="6" fill="none" stroke="#3a3a3a" stroke-width="1.3"/><path d="M5.5 3.5 L10.5 7 L5.5 10.5 Z" fill="#3a3a3a"/></svg>
<div class="a t" style="left:1338px;top:322px;width:80px;height:19px;line-height:19px;font-size:11.5px;color:#333;text-align:left;font-weight:normal;-webkit-text-stroke:0.55px currentColor;">Main</div>
<div class="a" style="left:1427px;top:136px;width:50px;height:7px;background:#232323;"></div>
<div class="a" style="left:1427px;top:136px;width:38px;height:7px;background:#176d7f;"></div>
<div class="a" style="left:1481px;top:136px;width:50px;height:7px;background:#232323;"></div>
<div class="a" style="left:1427px;top:136px;width:50px;height:7px;overflow:hidden"><div class="a t" style="left:0;top:-8px;width:50px;height:14px;line-height:14px;font-size:11.5px;color:#9fd0dc;text-align:center">-7.7</div></div>
<div class="a" style="left:1481px;top:136px;width:50px;height:7px;overflow:hidden"><div class="a t" style="left:0;top:-8px;width:50px;height:14px;line-height:14px;font-size:11.5px;color:#c8c8c8;text-align:center">C</div></div>
<div class="a" style="left:1427px;top:148px;width:33px;height:13px;background:#232323;"></div>
<div class="a t" style="left:1427px;top:148px;width:33px;height:13px;line-height:13px;font-size:11.5px;color:#b8b8b8;text-align:center;font-weight:normal;">&minus;<span style="font-size:14px">&infin;</span></div>
<div class="a" style="left:1463px;top:148px;width:33px;height:13px;background:#232323;"></div>
<div class="a t" style="left:1463px;top:148px;width:33px;height:13px;line-height:13px;font-size:11.5px;color:#b8b8b8;text-align:center;font-weight:normal;">&minus;<span style="font-size:14px">&infin;</span></div>
<div class="a" style="left:1536px;top:136px;width:3px;height:47px;background:#262626;"></div>
<div class="a" style="left:1541px;top:136px;width:3px;height:47px;background:#262626;"></div>
<div class="a" style="left:1427px;top:189px;width:50px;height:12px;background:#f8a64c;"></div>
<div class="a t" style="left:1427px;top:189px;width:50px;height:12px;line-height:12px;font-size:11.5px;color:#1a1a1a;text-align:center;font-weight:bold;">9</div>
<div class="a" style="left:1482px;top:189px;width:22px;height:12px;background:#232323;"></div>
<div class="a t" style="left:1482px;top:189px;width:22px;height:12px;line-height:12px;font-size:11.5px;color:#c8c8c8;text-align:center;font-weight:normal;">S</div>
<div class="a" style="left:1509px;top:189px;width:22px;height:12px;background:#232323;"></div>
<div class="a t" style="left:1509px;top:189px;width:22px;height:12px;line-height:12px;font-size:11.5px;color:#c8c8c8;text-align:center;font-weight:normal;"></div>
<svg class="a" style="left:1514px;top:190px;" width="12" height="10" viewBox="0 0 12 10"><circle cx="6" cy="5" r="4.2" fill="#c8c8c8"/><path d="M6 5 L6 1.5" stroke="#232323" stroke-width="1.3"/></svg>
<div class="a" style="left:1427px;top:210px;width:50px;height:12px;background:#f8a64c;"></div>
<div class="a t" style="left:1427px;top:210px;width:50px;height:12px;line-height:12px;font-size:11.5px;color:#1a1a1a;text-align:center;font-weight:bold;">10</div>
<div class="a" style="left:1482px;top:210px;width:22px;height:12px;background:#232323;"></div>
<div class="a t" style="left:1482px;top:210px;width:22px;height:12px;line-height:12px;font-size:11.5px;color:#c8c8c8;text-align:center;font-weight:normal;">S</div>
<div class="a" style="left:1509px;top:210px;width:22px;height:12px;background:#232323;"></div>
<div class="a t" style="left:1509px;top:210px;width:22px;height:12px;line-height:12px;font-size:11.5px;color:#c8c8c8;text-align:center;font-weight:normal;"></div>
<svg class="a" style="left:1514px;top:211px;" width="12" height="10" viewBox="0 0 12 10"><circle cx="6" cy="5" r="4.2" fill="#c8c8c8"/><path d="M6 5 L6 1.5" stroke="#232323" stroke-width="1.3"/></svg>
<div class="a" style="left:1427px;top:231px;width:50px;height:12px;background:#f8a64c;"></div>
<div class="a t" style="left:1427px;top:231px;width:50px;height:12px;line-height:12px;font-size:11.5px;color:#1a1a1a;text-align:center;font-weight:bold;">11</div>
<div class="a" style="left:1482px;top:231px;width:22px;height:12px;background:#232323;"></div>
<div class="a t" style="left:1482px;top:231px;width:22px;height:12px;line-height:12px;font-size:11.5px;color:#c8c8c8;text-align:center;font-weight:normal;">S</div>
<div class="a" style="left:1509px;top:231px;width:22px;height:12px;background:#232323;"></div>
<div class="a t" style="left:1509px;top:231px;width:22px;height:12px;line-height:12px;font-size:11.5px;color:#c8c8c8;text-align:center;font-weight:normal;"></div>
<svg class="a" style="left:1514px;top:232px;" width="12" height="10" viewBox="0 0 12 10"><circle cx="6" cy="5" r="4.2" fill="#c8c8c8"/><path d="M6 5 L6 1.5" stroke="#232323" stroke-width="1.3"/></svg>
<div class="a" style="left:1536px;top:186px;width:3px;height:18px;background:#262626;"></div>
<div class="a" style="left:1541px;top:186px;width:3px;height:18px;background:#262626;"></div>
<div class="a" style="left:1536px;top:207px;width:3px;height:18px;background:#262626;"></div>
<div class="a" style="left:1541px;top:207px;width:3px;height:18px;background:#262626;"></div>
<div class="a" style="left:1427px;top:248px;width:50px;height:13px;background:#232323;"></div>
<div class="a" style="left:1427px;top:248px;width:37px;height:13px;background:#176d7f;"></div>
<div class="a t" style="left:1427px;top:248px;width:50px;height:13px;line-height:13px;font-size:11.5px;color:#d8e8ee;text-align:center;font-weight:normal;">-6.6</div>
<div class="a" style="left:1481px;top:248px;width:50px;height:13px;background:#232323;"></div>
<div class="a t" style="left:1481px;top:248px;width:50px;height:13px;line-height:13px;font-size:11.5px;color:#c8c8c8;text-align:center;font-weight:normal;">C</div>
<div class="a" style="left:1427px;top:267px;width:33px;height:13px;background:#232323;"></div>
<div class="a t" style="left:1427px;top:267px;width:33px;height:13px;line-height:13px;font-size:11.5px;color:#b8b8b8;text-align:center;font-weight:normal;">&minus;<span style="font-size:14px">&infin;</span></div>
<div class="a" style="left:1463px;top:267px;width:33px;height:13px;background:#232323;"></div>
<div class="a t" style="left:1463px;top:267px;width:33px;height:13px;line-height:13px;font-size:11.5px;color:#b8b8b8;text-align:center;font-weight:normal;">&minus;<span style="font-size:14px">&infin;</span></div>
<div class="a" style="left:1536px;top:229px;width:3px;height:90px;background:#262626;"></div>
<div class="a" style="left:1541px;top:229px;width:3px;height:90px;background:#262626;"></div>
<div class="a" style="left:1536px;top:287px;width:3px;height:32px;background:#3ee06a;"></div>
<div class="a" style="left:1541px;top:283px;width:3px;height:36px;background:#3ee06a;"></div>
<div class="a" style="left:1536px;top:263px;width:3px;height:1px;background:#3ee06a;"></div>
<div class="a" style="left:1541px;top:263px;width:3px;height:1px;background:#3ee06a;"></div>
<div class="a" style="left:1427px;top:325px;width:52px;height:13px;background:#232323;"></div>
<div class="a" style="left:1427px;top:325px;width:42px;height:13px;background:#176d7f;"></div>
<div class="a t" style="left:1427px;top:325px;width:52px;height:13px;line-height:13px;font-size:11.5px;color:#d8e8ee;text-align:center;font-weight:normal;">0</div>
<div class="a" style="left:1481px;top:325px;width:50px;height:13px;background:#232323;"></div>
<div class="a" style="left:1481px;top:325px;width:42px;height:13px;background:#3b72c8;"></div>
<div class="a t" style="left:1481px;top:325px;width:50px;height:13px;line-height:13px;font-size:11.5px;color:#d8e8ee;text-align:center;font-weight:normal;">0</div>
<div class="a" style="left:1536px;top:331px;width:3px;height:8px;background:#3ee06a;"></div>
<div class="a" style="left:1541px;top:331px;width:3px;height:8px;background:#3ee06a;"></div>
<div class="a t" style="left:1256px;top:321px;width:50px;height:21px;line-height:21px;font-size:19px;color:#6c6c6c;text-align:right;font-weight:bold;">1/2</div>
<div class="a" style="left:1312px;top:348px;width:14px;height:13px;background:#f8a64c;"></div>
<svg class="a" style="left:1313px;top:349px;" width="12" height="11" viewBox="0 0 12 11"><path d="M1 5.5 H11 M3 3 V8 M5 1.5 V9.5 M7 2.5 V8.5 M9 3.5 V7.5" stroke="#3a2a10" stroke-width="1.1"/></svg>
<div class="a" style="left:1330px;top:348px;width:38px;height:13px;background:#232323;"></div>
<div class="a" style="left:1330px;top:348px;width:12px;height:13px;background:#176d7f;"></div>
<div class="a t" style="left:1330px;top:348px;width:38px;height:13px;line-height:13px;font-size:11.5px;color:#c8c8c8;text-align:center;font-weight:normal;">1.00x</div>
<div class="a" style="left:1386px;top:348px;width:16px;height:13px;background:#232323;"></div>
<div class="a t" style="left:1386px;top:348px;width:16px;height:13px;line-height:13px;font-size:11.5px;color:#c8c8c8;text-align:center;font-weight:normal;">H</div>
<div class="a" style="left:1405px;top:348px;width:17px;height:13px;background:#232323;"></div>
<div class="a t" style="left:1405px;top:348px;width:17px;height:13px;line-height:13px;font-size:11.5px;color:#c8c8c8;text-align:center;font-weight:normal;">W</div>
<div class="a" style="left:10px;top:376px;width:184px;height:545px;background:#3a3a3a;"></div>
<div class="a" style="left:10px;top:376px;width:184px;height:18px;background:#f8ef7b;"></div>
<div class="a" style="left:14px;top:380px;width:10px;height:10px;background:#f8a64c;border:1px solid #3a2a10;box-sizing:border-box;"></div>
<div class="a t" style="left:29px;top:376px;width:60px;height:18px;line-height:18px;font-size:11.5px;color:#2a2a10;text-align:left;font-weight:normal;-webkit-text-stroke:0.5px currentColor;">Clip</div>
<div class="a" style="left:10px;top:394px;width:184px;height:1px;background:#2a2a2a;"></div>
<div class="a" style="left:10px;top:395px;width:184px;height:18px;background:#424242;"></div>
<div class="a t" style="left:29px;top:395px;width:120px;height:18px;line-height:18px;font-size:11.5px;color:#c8c8c8;text-align:left;font-weight:normal;">Clip</div>
<svg class="a" style="left:173px;top:399px;" width="10" height="10" viewBox="0 0 10 10"><path d="M9 1 L1 5 L9 9 Z" fill="#c8c8c8"/></svg>
<div class="a" style="left:10px;top:414px;width:184px;height:1px;background:#2a2a2a;"></div>
<div class="a" style="left:10px;top:415px;width:184px;height:18px;background:#424242;"></div>
<div class="a t" style="left:29px;top:415px;width:120px;height:18px;line-height:18px;font-size:11.5px;color:#c8c8c8;text-align:left;font-weight:normal;">Launch</div>
<svg class="a" style="left:173px;top:419px;" width="10" height="10" viewBox="0 0 10 10"><path d="M9 1 L1 5 L9 9 Z" fill="#c8c8c8"/></svg>
<div class="a" style="left:10px;top:433px;width:184px;height:1px;background:#2a2a2a;"></div>
<div class="a" style="left:10px;top:434px;width:184px;height:18px;background:#424242;"></div>
<div class="a t" style="left:29px;top:434px;width:120px;height:18px;line-height:18px;font-size:11.5px;color:#c8c8c8;text-align:left;font-weight:normal;">Pitch &amp; Time</div>
<svg class="a" style="left:173px;top:438px;" width="10" height="10" viewBox="0 0 10 10"><path d="M9 1 L1 5 L9 9 Z" fill="#c8c8c8"/></svg>
<div class="a" style="left:10px;top:453px;width:184px;height:1px;background:#2a2a2a;"></div>
<div class="a" style="left:10px;top:454px;width:184px;height:18px;background:#424242;"></div>
<div class="a t" style="left:29px;top:454px;width:120px;height:18px;line-height:18px;font-size:11.5px;color:#c8c8c8;text-align:left;font-weight:normal;">Transform</div>
<svg class="a" style="left:173px;top:459px;" width="10" height="9" viewBox="0 0 10 9"><path d="M1 1 L9 1 L5 8 Z" fill="#c8c8c8"/></svg>
<div class="a" style="left:10px;top:473px;width:184px;height:1px;background:#2a2a2a;"></div>
<svg class="a" style="left:14px;top:398px;" width="12" height="12" viewBox="0 0 12 12"><rect x="0.7" y="0.7" width="10.6" height="10.6" fill="none" stroke="#c8c8c8" stroke-width="1.2"/><path d="M4 3 L8.5 6 L4 9 Z" fill="#c8c8c8"/></svg>
<svg class="a" style="left:14px;top:418px;" width="12" height="12" viewBox="0 0 12 12"><path d="M1 1 V11 M3.5 2 V10" stroke="#c8c8c8" stroke-width="1.3"/><path d="M6 3.5 L10 6 L6 8.5 Z" fill="#c8c8c8"/></svg>
<svg class="a" style="left:14px;top:437px;" width="12" height="12" viewBox="0 0 12 12"><path d="M1 3.5 H11 M1 8.5 H11" stroke="#c8c8c8" stroke-width="1.3"/><rect x="2" y="2" width="3" height="3" fill="#c8c8c8"/><rect x="6" y="7" width="3" height="3" fill="#c8c8c8"/></svg>
<svg class="a" style="left:13px;top:456px;" width="14" height="14" viewBox="0 0 14 14"><circle cx="5" cy="5" r="4" fill="#c8c8c8"/><circle cx="11" cy="6" r="1" fill="#c8c8c8"/><circle cx="9" cy="11" r="1" fill="#c8c8c8"/><circle cx="4" cy="12" r="1" fill="#c8c8c8"/></svg>
<div class="a" style="left:10px;top:474px;width:184px;height:206px;background:#3a3a3a;"></div>
<svg class="a" style="left:20px;top:477px;" width="15" height="15" viewBox="0 0 15 15"><circle cx="7.5" cy="7.5" r="7.3" fill="#1a1a1a"/><path d="M4.6 6.2 A3.3 3.3 0 1 1 5.2 9.8" stroke="#d8d8d8" stroke-width="1.3" fill="none"/><path d="M3 4.2 L6.6 5 L4 7.8 Z" fill="#d8d8d8"/></svg>
<div class="a" style="left:39px;top:477px;width:145px;height:14px;background:#1f1f1f;"></div>
<div class="a t" style="left:41px;top:477px;width:100px;height:14px;line-height:14px;font-size:11.5px;color:#c8c8c8;text-align:left;font-weight:normal;">Articulate</div>
<svg class="a" style="left:172px;top:480px;" width="10" height="8" viewBox="0 0 10 8"><path d="M1 1 L9 1 L5 7 Z" fill="#c8c8c8"/></svg>
<div class="a" style="left:20px;top:495px;width:164px;height:1px;background:#2e2e2e;"></div>
<div class="a" style="left:21px;top:501px;width:84px;height:147px;background:#1e1e1e;"></div>
<svg class="a" style="left:36px;top:518px;" width="52" height="52" viewBox="0 0 52 52"><circle cx="12" cy="36" r="7" fill="none" stroke="#5c5c5c" stroke-width="1.4"/><circle cx="30" cy="33" r="7" fill="none" stroke="#5c5c5c" stroke-width="1.4"/><path d="M19 36 V10 L26 16" stroke="#5c5c5c" stroke-width="1.4" fill="none"/><path d="M37 33 V4 L45 12" stroke="#5c5c5c" stroke-width="1.4" fill="none"/><path d="M15 44 Q24 50 33 42" stroke="#e6b07e" stroke-width="1.8" fill="none"/></svg>
<div class="a" style="left:24px;top:587px;width:78px;height:1px;background:#333;"></div>
<div class="a" style="left:26px;top:593px;width:74px;height:14px;background:#f8a64c;"></div>
<div class="a t" style="left:26px;top:593px;width:74px;height:14px;line-height:14px;font-size:11.5px;color:#2a1a08;text-align:center;font-weight:normal;">Legato</div>
<div class="a" style="left:26px;top:611px;width:74px;height:15px;border:1px solid #f0a050;box-sizing:border-box;"></div>
<div class="a t" style="left:26px;top:611px;width:74px;height:15px;line-height:15px;font-size:11.5px;color:#e0b080;text-align:center;font-weight:normal;">Tenuto</div>
<div class="a" style="left:26px;top:630px;width:74px;height:15px;border:1px solid #f0a050;box-sizing:border-box;"></div>
<div class="a t" style="left:26px;top:630px;width:74px;height:15px;line-height:15px;font-size:11.5px;color:#e0b080;text-align:center;font-weight:normal;">Staccato</div>
<div class="a t" style="left:110px;top:505px;width:70px;height:12px;line-height:12px;font-size:11.5px;color:#bdbdbd;text-align:center;font-weight:normal;">Offset</div>
<svg class="a" style="left:122px;top:522px;" width="46" height="46" viewBox="0 0 46 46"><path d="M9.56 36.44 A19 19 0 1 1 36.44 36.44" stroke="#151515" stroke-width="2.6" fill="none"/><path d="M23 23 L23.00 4.00" stroke="#151515" stroke-width="2.6"/></svg>
<svg class="a" style="left:141px;top:518px;" width="8" height="5" viewBox="0 0 8 5"><path d="M0 0 L8 0 L4 4 Z" fill="#151515"/></svg>
<div class="a t" style="left:110px;top:566px;width:70px;height:13px;line-height:13px;font-size:11.5px;color:#bdbdbd;text-align:center;font-weight:normal;">0.0 %</div>
<div class="a t" style="left:110px;top:585px;width:70px;height:13px;line-height:13px;font-size:11.5px;color:#bdbdbd;text-align:center;font-weight:normal;">Variation</div>
<svg class="a" style="left:128px;top:600px;" width="34" height="34" viewBox="0 0 34 34"><path d="M7.81 26.19 A13 13 0 1 1 26.19 26.19" stroke="#151515" stroke-width="2.4" fill="none"/><path d="M17 17 L17.00 4.00" stroke="#151515" stroke-width="2.4"/></svg>
<svg class="a" style="left:141px;top:599px;" width="8" height="5" viewBox="0 0 8 5"><path d="M0 0 L8 0 L4 4 Z" fill="#151515"/></svg>
<div class="a t" style="left:110px;top:630px;width:70px;height:13px;line-height:13px;font-size:11.5px;color:#bdbdbd;text-align:center;font-weight:normal;">0.0 %</div>
<div class="a" style="left:20px;top:653px;width:164px;height:1px;background:#2e2e2e;"></div>
<div class="a" style="left:21px;top:660px;width:73px;height:13px;background:#f8a64c;"></div>
<div class="a t" style="left:21px;top:660px;width:73px;height:13px;line-height:13px;font-size:11.5px;color:#2a1a08;text-align:center;font-weight:normal;">Transform</div>
<svg class="a" style="left:169px;top:659px;" width="15" height="15" viewBox="0 0 15 15"><circle cx="7.5" cy="7.5" r="7.3" fill="#1a1a1a"/><path d="M9.8 6.6 A3.2 3.2 0 1 0 9.9 9.2" stroke="#d8d8d8" stroke-width="1.4" fill="none"/><path d="M8.6 3.8 L11.6 4.6 L10 7.6 Z" fill="#d8d8d8"/></svg>
<div class="a" style="left:10px;top:679px;width:184px;height:18px;background:#454545;"></div>
<div class="a" style="left:10px;top:678px;width:184px;height:1px;background:#2a2a2a;"></div>
<svg class="a" style="left:14px;top:682px;" width="12" height="12" viewBox="0 0 12 12"><circle cx="6" cy="6" r="1.6" fill="#c8c8c8"/><path d="M1 3 V1 H3 M9 1 H11 V3 M11 9 V11 H9 M3 11 H1 V9" stroke="#c8c8c8" stroke-width="1.2" fill="none"/></svg>
<div class="a t" style="left:29px;top:679px;width:80px;height:18px;line-height:18px;font-size:11.5px;color:#c8c8c8;text-align:left;font-weight:normal;">Generate</div>
<svg class="a" style="left:173px;top:684px;" width="10" height="9" viewBox="0 0 10 9"><path d="M1 1 L9 1 L5 8 Z" fill="#c8c8c8"/></svg>
<svg class="a" style="left:20px;top:702px;" width="15" height="15" viewBox="0 0 15 15"><circle cx="7.5" cy="7.5" r="7.3" fill="#1a1a1a"/><path d="M4.6 6.2 A3.3 3.3 0 1 1 5.2 9.8" stroke="#d8d8d8" stroke-width="1.3" fill="none"/><path d="M3 4.2 L6.6 5 L4 7.8 Z" fill="#d8d8d8"/></svg>
<div class="a" style="left:39px;top:701px;width:145px;height:14px;background:#1f1f1f;"></div>
<div class="a t" style="left:41px;top:701px;width:100px;height:14px;line-height:14px;font-size:11.5px;color:#c8c8c8;text-align:left;font-weight:normal;">Stacks</div>
<svg class="a" style="left:172px;top:704px;" width="10" height="8" viewBox="0 0 10 8"><path d="M1 1 L9 1 L5 7 Z" fill="#c8c8c8"/></svg>
<div class="a" style="left:20px;top:720px;width:164px;height:160px;background:#1e1e1e;"></div>
<div class="a" style="left:65px;top:726px;width:73px;height:74px;background:#0d5767;border:1px solid #2ab8cc;box-sizing:border-box;"></div>
<svg class="a" style="left:65px;top:726px;" width="73" height="74" viewBox="0 0 73 74"><path d="M3 8 V3 H8 M65 3 H70 V8 M70 66 V71 H65 M8 71 H3 V66" stroke="#2ab8cc" stroke-width="1" fill="none"/><path d="M33.5 6 L39.5 6 L36.5 2.5 Z M33.5 67 L39.5 67 L36.5 70.5 Z" fill="#2ab8cc"/><path d="M10 22 L27 52 L45 22 L63 52" stroke="#a0acb0" stroke-width="1.1" fill="none"/><rect x="23.5" y="48.5" width="7" height="7" fill="#c8c8c8"/><rect x="41.5" y="18.5" width="7" height="7" fill="#c8c8c8"/><rect x="59.5" y="48.5" width="7" height="7" fill="#c8c8c8"/><path d="M10 16 L16 22 L10 28 L4 22 Z" fill="#f8a64c"/></svg>
<svg class="a" style="left:164px;top:743px;" width="17" height="17" viewBox="0 0 17 17"><circle cx="8.5" cy="8.5" r="7.3" fill="none" stroke="#35c0c4" stroke-width="1.3"/><path d="M8.5 4.5 V12.5 M4.5 8.5 H12.5" stroke="#35c0c4" stroke-width="1.5"/></svg>
<svg class="a" style="left:164px;top:766px;" width="17" height="17" viewBox="0 0 17 17"><circle cx="8.5" cy="8.5" r="7.3" fill="none" stroke="#1d5560" stroke-width="1.3"/><path d="M4.5 8.5 H12.5" stroke="#1d5560" stroke-width="1.3"/></svg>
<div class="a" style="left:24px;top:803px;width:156px;height:1px;background:#333;"></div>
<div class="a t" style="left:34px;top:804px;width:70px;height:13px;line-height:13px;font-size:11.5px;color:#a8a8a8;text-align:center;font-weight:normal;">Root</div>
<div class="a t" style="left:100px;top:804px;width:72px;height:13px;line-height:13px;font-size:11.5px;color:#a8a8a8;text-align:center;font-weight:normal;">Inversion</div>
<svg class="a" style="left:51.5px;top:812.5px;" width="35.0" height="35.0" viewBox="0 0 35.0 35.0"><path d="M7.95 27.05 A13.5 13.5 0 0 1 16.09 4.07" stroke="#2ab8cc" stroke-width="2.4" fill="none"/><path d="M16.09 4.07 A13.5 13.5 0 0 1 27.05 27.05" stroke="#a8a8a8" stroke-width="2.4" fill="none"/><path d="M17.34 16.01 L16.09 4.07" stroke="#c8c8c8" stroke-width="2"/></svg>
<svg class="a" style="left:118.5px;top:812.5px;" width="35.0" height="35.0" viewBox="0 0 35.0 35.0"><path d="M8.47 27.53 A13.5 13.5 0 1 1 27.05 27.05" stroke="#a8a8a8" stroke-width="2.4" fill="none"/><path d="M16.50 18.61 L8.47 27.53" stroke="#c8c8c8" stroke-width="2"/></svg>
<div class="a t" style="left:34px;top:842px;width:70px;height:13px;line-height:13px;font-size:11.5px;color:#2ab8cc;text-align:center;font-weight:normal;">C#3</div>
<div class="a t" style="left:101px;top:842px;width:70px;height:13px;line-height:13px;font-size:11.5px;color:#2ab8cc;text-align:center;font-weight:normal;">0</div>
<div class="a" style="left:24px;top:858px;width:156px;height:1px;background:#333;"></div>
<div class="a t" style="left:25px;top:862px;width:60px;height:13px;line-height:13px;font-size:11.5px;color:#a8a8a8;text-align:left;font-weight:normal;">Duration</div>
<div class="a t" style="left:85px;top:862px;width:10px;height:13px;line-height:13px;font-size:11.5px;color:#f8a64c;text-align:left;font-weight:normal;">1</div>
<div class="a t" style="left:112px;top:862px;width:50px;height:13px;line-height:13px;font-size:11.5px;color:#a8a8a8;text-align:left;font-weight:normal;">Offset</div>
<div class="a t" style="left:170px;top:862px;width:10px;height:13px;line-height:13px;font-size:11.5px;color:#f8a64c;text-align:left;font-weight:normal;">0</div>
<div class="a" style="left:21px;top:885px;width:73px;height:13px;background:#f8a64c;"></div>
<div class="a t" style="left:21px;top:885px;width:73px;height:13px;line-height:13px;font-size:11.5px;color:#2a1a08;text-align:center;font-weight:normal;">Generate</div>
<svg class="a" style="left:169px;top:884px;" width="15" height="15" viewBox="0 0 15 15"><circle cx="7.5" cy="7.5" r="7.3" fill="#1a1a1a"/><path d="M9.8 6.6 A3.2 3.2 0 1 0 9.9 9.2" stroke="#d8d8d8" stroke-width="1.4" fill="none"/><path d="M8.6 3.8 L11.6 4.6 L10 7.6 Z" fill="#d8d8d8"/></svg>
<div class="a" style="left:10px;top:902px;width:184px;height:1px;background:#2e2e2e;"></div>
<div class="a" style="left:195px;top:376px;width:1px;height:545px;background:#242424;"></div>
<div class="a" style="left:196px;top:376px;width:1357px;height:545px;background:#353535;"></div>
<div class="a" style="left:196px;top:376px;width:1357px;height:19px;background:#353535;"></div>
<div class="a" style="left:199px;top:378px;width:39px;height:14px;background:#232323;"></div>
<div class="a t" style="left:199px;top:378px;width:39px;height:14px;line-height:14px;font-size:11.5px;color:#c8c8c8;text-align:center;font-weight:normal;">Fold</div>
<div class="a" style="left:242px;top:378px;width:39px;height:14px;background:#232323;"></div>
<div class="a t" style="left:242px;top:378px;width:39px;height:14px;line-height:14px;font-size:11.5px;color:#c8c8c8;text-align:center;font-weight:normal;">Scale</div>
<div class="a" style="left:286px;top:378px;width:1px;height:14px;background:#2a2a2a;"></div>
<div class="a" style="left:291px;top:378px;width:13px;height:13px;background:#b68cf5;"></div>
<svg class="a" style="left:292px;top:379px;" width="11" height="11" viewBox="0 0 11 11"><path d="M2 5.5 L4.5 8.5 L9.5 2" stroke="#1e1040" stroke-width="1.6" fill="none"/></svg>
<div class="a t" style="left:308px;top:378px;width:100px;height:14px;line-height:14px;font-size:11.5px;color:#c8c8c8;text-align:left;font-weight:normal;">Highlight Scale</div>
<div class="a" style="left:774px;top:376px;width:66px;height:18px;background:#474747;"></div>
<div class="a t" style="left:774px;top:376px;width:66px;height:18px;line-height:18px;font-size:11.5px;color:#d0d0d0;text-align:center;font-weight:normal;">Notes</div>
<div class="a" style="left:840px;top:376px;width:1px;height:18px;background:#2a2a2a;"></div>
<div class="a t" style="left:841px;top:376px;width:66px;height:18px;line-height:18px;font-size:11.5px;color:#a8a8a8;text-align:center;font-weight:normal;">Envelopes</div>
<div class="a" style="left:907px;top:376px;width:1px;height:18px;background:#2a2a2a;"></div>
<div class="a t" style="left:908px;top:376px;width:65px;height:18px;line-height:18px;font-size:11.5px;color:#a8a8a8;text-align:center;font-weight:normal;">MPE</div>
<div class="a" style="left:973px;top:376px;width:1px;height:18px;background:#2a2a2a;"></div>
<div class="a t" style="left:1494px;top:376px;width:42px;height:18px;line-height:18px;font-size:11.5px;color:#c8c8c8;text-align:right;font-weight:normal;">1/16</div>
<svg class="a" style="left:1540px;top:381px;" width="9" height="8" viewBox="0 0 9 8"><path d="M1 1 L8 1 L4.5 7 Z" fill="#c8c8c8"/></svg>
<div class="a" style="left:196px;top:394px;width:1357px;height:1px;background:#2a2a2a;"></div>
<div class="a" style="left:196px;top:395px;width:62px;height:19px;background:#424242;"></div>
<div class="a" style="left:196px;top:414px;width:62px;height:43px;background:#363636;"></div>
<div class="a" style="left:258px;top:395px;width:1295px;height:20px;background:#383838;"></div>
<div class="a" style="left:258px;top:405px;width:1px;height:7px;background:#7a7a7a;"></div>
<div class="a" style="left:258px;top:405px;width:2px;height:1px;background:#7a7a7a;"></div>
<div class="a t" style="left:263px;top:399.02px;width:120px;height:16px;line-height:16px;font-size:11.5px;color:#b0b0b0;text-align:left;font-weight:normal;">1</div>
<div class="a" style="left:279px;top:411px;width:1px;height:2px;background:#5a5a5a;"></div>
<div class="a" style="left:299px;top:411px;width:1px;height:2px;background:#5a5a5a;"></div>
<div class="a" style="left:319px;top:411px;width:1px;height:2px;background:#5a5a5a;"></div>
<div class="a" style="left:340px;top:405px;width:1px;height:7px;background:#7a7a7a;"></div>
<div class="a" style="left:340px;top:405px;width:2px;height:1px;background:#7a7a7a;"></div>
<div class="a t" style="left:345px;top:399.02px;width:120px;height:16px;line-height:16px;font-size:11.5px;color:#b0b0b0;text-align:left;font-weight:normal;">1.2</div>
<div class="a" style="left:360px;top:411px;width:1px;height:2px;background:#5a5a5a;"></div>
<div class="a" style="left:380px;top:411px;width:1px;height:2px;background:#5a5a5a;"></div>
<div class="a" style="left:400px;top:411px;width:1px;height:2px;background:#5a5a5a;"></div>
<div class="a" style="left:421px;top:405px;width:1px;height:7px;background:#7a7a7a;"></div>
<div class="a" style="left:421px;top:405px;width:2px;height:1px;background:#7a7a7a;"></div>
<div class="a t" style="left:426px;top:399.02px;width:120px;height:16px;line-height:16px;font-size:11.5px;color:#b0b0b0;text-align:left;font-weight:normal;">1.3</div>
<div class="a" style="left:441px;top:411px;width:1px;height:2px;background:#5a5a5a;"></div>
<div class="a" style="left:461px;top:411px;width:1px;height:2px;background:#5a5a5a;"></div>
<div class="a" style="left:481px;top:411px;width:1px;height:2px;background:#5a5a5a;"></div>
<div class="a" style="left:502px;top:405px;width:1px;height:7px;background:#7a7a7a;"></div>
<div class="a" style="left:502px;top:405px;width:2px;height:1px;background:#7a7a7a;"></div>
<div class="a t" style="left:507px;top:399.02px;width:120px;height:16px;line-height:16px;font-size:11.5px;color:#b0b0b0;text-align:left;font-weight:normal;">1.4</div>
<div class="a" style="left:522px;top:411px;width:1px;height:2px;background:#5a5a5a;"></div>
<div class="a" style="left:542px;top:411px;width:1px;height:2px;background:#5a5a5a;"></div>
<div class="a" style="left:563px;top:411px;width:1px;height:2px;background:#5a5a5a;"></div>
<div class="a" style="left:583px;top:405px;width:1px;height:7px;background:#7a7a7a;"></div>
<div class="a" style="left:583px;top:405px;width:2px;height:1px;background:#7a7a7a;"></div>
<div class="a t" style="left:588px;top:399.02px;width:120px;height:16px;line-height:16px;font-size:11.5px;color:#b0b0b0;text-align:left;font-weight:normal;">2</div>
<div class="a" style="left:603px;top:411px;width:1px;height:2px;background:#5a5a5a;"></div>
<div class="a" style="left:623px;top:411px;width:1px;height:2px;background:#5a5a5a;"></div>
<div class="a" style="left:644px;top:411px;width:1px;height:2px;background:#5a5a5a;"></div>
<div class="a" style="left:664px;top:405px;width:1px;height:7px;background:#7a7a7a;"></div>
<div class="a" style="left:664px;top:405px;width:2px;height:1px;background:#7a7a7a;"></div>
<div class="a t" style="left:669px;top:399.02px;width:120px;height:16px;line-height:16px;font-size:11.5px;color:#b0b0b0;text-align:left;font-weight:normal;">2.2</div>
<div class="a" style="left:684px;top:411px;width:1px;height:2px;background:#5a5a5a;"></div>
<div class="a" style="left:704px;top:411px;width:1px;height:2px;background:#5a5a5a;"></div>
<div class="a" style="left:725px;top:411px;width:1px;height:2px;background:#5a5a5a;"></div>
<div class="a" style="left:745px;top:405px;width:1px;height:7px;background:#7a7a7a;"></div>
<div class="a" style="left:745px;top:405px;width:2px;height:1px;background:#7a7a7a;"></div>
<div class="a t" style="left:750px;top:399.02px;width:120px;height:16px;line-height:16px;font-size:11.5px;color:#b0b0b0;text-align:left;font-weight:normal;">2.3</div>
<div class="a" style="left:765px;top:411px;width:1px;height:2px;background:#5a5a5a;"></div>
<div class="a" style="left:786px;top:411px;width:1px;height:2px;background:#5a5a5a;"></div>
<div class="a" style="left:806px;top:411px;width:1px;height:2px;background:#5a5a5a;"></div>
<div class="a" style="left:826px;top:405px;width:1px;height:7px;background:#7a7a7a;"></div>
<div class="a" style="left:826px;top:405px;width:2px;height:1px;background:#7a7a7a;"></div>
<div class="a t" style="left:831px;top:399.02px;width:120px;height:16px;line-height:16px;font-size:11.5px;color:#b0b0b0;text-align:left;font-weight:normal;">2.4</div>
<div class="a" style="left:846px;top:411px;width:1px;height:2px;background:#5a5a5a;"></div>
<div class="a" style="left:867px;top:411px;width:1px;height:2px;background:#5a5a5a;"></div>
<div class="a" style="left:887px;top:411px;width:1px;height:2px;background:#5a5a5a;"></div>
<div class="a" style="left:907px;top:405px;width:1px;height:7px;background:#7a7a7a;"></div>
<div class="a" style="left:907px;top:405px;width:2px;height:1px;background:#7a7a7a;"></div>
<div class="a t" style="left:912px;top:399.02px;width:120px;height:16px;line-height:16px;font-size:11.5px;color:#b0b0b0;text-align:left;font-weight:normal;">3</div>
<div class="a" style="left:927px;top:411px;width:1px;height:2px;background:#5a5a5a;"></div>
<div class="a" style="left:948px;top:411px;width:1px;height:2px;background:#5a5a5a;"></div>
<div class="a" style="left:968px;top:411px;width:1px;height:2px;background:#5a5a5a;"></div>
<div class="a" style="left:988px;top:405px;width:1px;height:7px;background:#7a7a7a;"></div>
<div class="a" style="left:988px;top:405px;width:2px;height:1px;background:#7a7a7a;"></div>
<div class="a t" style="left:993px;top:399.02px;width:120px;height:16px;line-height:16px;font-size:11.5px;color:#b0b0b0;text-align:left;font-weight:normal;">3.2</div>
<div class="a" style="left:1008px;top:411px;width:1px;height:2px;background:#5a5a5a;"></div>
<div class="a" style="left:1029px;top:411px;width:1px;height:2px;background:#5a5a5a;"></div>
<div class="a" style="left:1049px;top:411px;width:1px;height:2px;background:#5a5a5a;"></div>
<div class="a" style="left:1069px;top:405px;width:1px;height:7px;background:#7a7a7a;"></div>
<div class="a" style="left:1069px;top:405px;width:2px;height:1px;background:#7a7a7a;"></div>
<div class="a t" style="left:1074px;top:399.02px;width:120px;height:16px;line-height:16px;font-size:11.5px;color:#b0b0b0;text-align:left;font-weight:normal;">3.3</div>
<div class="a" style="left:1090px;top:411px;width:1px;height:2px;background:#5a5a5a;"></div>
<div class="a" style="left:1110px;top:411px;width:1px;height:2px;background:#5a5a5a;"></div>
<div class="a" style="left:1130px;top:411px;width:1px;height:2px;background:#5a5a5a;"></div>
<div class="a" style="left:1150px;top:405px;width:1px;height:7px;background:#7a7a7a;"></div>
<div class="a" style="left:1150px;top:405px;width:2px;height:1px;background:#7a7a7a;"></div>
<div class="a t" style="left:1155px;top:399.02px;width:120px;height:16px;line-height:16px;font-size:11.5px;color:#b0b0b0;text-align:left;font-weight:normal;">3.4</div>
<div class="a" style="left:1171px;top:411px;width:1px;height:2px;background:#5a5a5a;"></div>
<div class="a" style="left:1191px;top:411px;width:1px;height:2px;background:#5a5a5a;"></div>
<div class="a" style="left:1211px;top:411px;width:1px;height:2px;background:#5a5a5a;"></div>
<div class="a" style="left:1231px;top:405px;width:1px;height:7px;background:#7a7a7a;"></div>
<div class="a" style="left:1231px;top:405px;width:2px;height:1px;background:#7a7a7a;"></div>
<div class="a t" style="left:1236px;top:399.02px;width:120px;height:16px;line-height:16px;font-size:11.5px;color:#b0b0b0;text-align:left;font-weight:normal;">4</div>
<div class="a" style="left:1252px;top:411px;width:1px;height:2px;background:#5a5a5a;"></div>
<div class="a" style="left:1272px;top:411px;width:1px;height:2px;background:#5a5a5a;"></div>
<div class="a" style="left:1292px;top:411px;width:1px;height:2px;background:#5a5a5a;"></div>
<div class="a" style="left:1313px;top:405px;width:1px;height:7px;background:#7a7a7a;"></div>
<div class="a" style="left:1313px;top:405px;width:2px;height:1px;background:#7a7a7a;"></div>
<div class="a t" style="left:1318px;top:399.02px;width:120px;height:16px;line-height:16px;font-size:11.5px;color:#b0b0b0;text-align:left;font-weight:normal;">4.2</div>
<div class="a" style="left:1333px;top:411px;width:1px;height:2px;background:#5a5a5a;"></div>
<div class="a" style="left:1353px;top:411px;width:1px;height:2px;background:#5a5a5a;"></div>
<div class="a" style="left:1373px;top:411px;width:1px;height:2px;background:#5a5a5a;"></div>
<div class="a" style="left:1394px;top:405px;width:1px;height:7px;background:#7a7a7a;"></div>
<div class="a" style="left:1394px;top:405px;width:2px;height:1px;background:#7a7a7a;"></div>
<div class="a t" style="left:1399px;top:399.02px;width:120px;height:16px;line-height:16px;font-size:11.5px;color:#b0b0b0;text-align:left;font-weight:normal;">4.3</div>
<div class="a" style="left:1414px;top:411px;width:1px;height:2px;background:#5a5a5a;"></div>
<div class="a" style="left:1434px;top:411px;width:1px;height:2px;background:#5a5a5a;"></div>
<div class="a" style="left:1454px;top:411px;width:1px;height:2px;background:#5a5a5a;"></div>
<div class="a" style="left:1475px;top:405px;width:1px;height:7px;background:#7a7a7a;"></div>
<div class="a" style="left:1475px;top:405px;width:2px;height:1px;background:#7a7a7a;"></div>
<div class="a t" style="left:1480px;top:399.02px;width:120px;height:16px;line-height:16px;font-size:11.5px;color:#b0b0b0;text-align:left;font-weight:normal;">4.4</div>
<div class="a" style="left:1495px;top:411px;width:1px;height:2px;background:#5a5a5a;"></div>
<div class="a" style="left:1515px;top:411px;width:1px;height:2px;background:#5a5a5a;"></div>
<div class="a" style="left:1536px;top:411px;width:1px;height:2px;background:#5a5a5a;"></div>
<div class="a" style="left:258px;top:415px;width:1295px;height:10px;background:#f8ef7b;"></div>
<svg class="a" style="left:258px;top:414px;" width="14" height="12" viewBox="0 0 14 12"><path d="M0 0 L10 6 L0 12 Z" fill="#7a7a7a"/></svg>
<svg class="a" style="left:1541px;top:414px;" width="12" height="12" viewBox="0 0 12 12"><path d="M12 0 L2 6 L12 12 Z" fill="#6a6a6a"/></svg>
<div class="a" style="left:258px;top:425px;width:1295px;height:12px;background:#353535;"></div>
<svg class="a" style="left:258px;top:425px;" width="14" height="12" viewBox="0 0 14 12"><path d="M0 0 L10 6 L0 12 Z" fill="#7a7a7a"/></svg>
<svg class="a" style="left:1541px;top:425px;" width="12" height="12" viewBox="0 0 12 12"><path d="M12 0 L2 6 L12 12" stroke="#8a8a8a" stroke-width="1" fill="none"/></svg>
<div class="a" style="left:258px;top:437px;width:1295px;height:15px;background:#303030;"></div>
<div class="a" style="left:258px;top:452px;width:649px;height:4px;background:#6a8a94;"></div>
<svg class="a" style="left:903px;top:451px;" width="6" height="6" viewBox="0 0 6 6"><path d="M0 0 L6 0 L0 6 Z" fill="#8ab0bc"/></svg>
<div class="a" style="left:230px;top:440px;width:25px;height:14px;background:#3b72c8;border:1px solid #1a2a50;box-sizing:border-box;"></div>
<svg class="a" style="left:236px;top:442px;" width="12" height="10" viewBox="0 0 12 10"><path d="M2.5 8 V5.5 A3.5 3.5 0 0 1 9.5 5.5 V8" stroke="#10203a" stroke-width="1.5" fill="none"/><rect x="1.5" y="6.5" width="2" height="3" fill="#10203a"/><rect x="8.5" y="6.5" width="2" height="3" fill="#10203a"/></svg>
<div class="a" style="left:196px;top:457px;width:34px;height:385px;background:#363636;"></div>
<div class="a" style="left:258px;top:457px;width:1295px;height:21px;background:#564e6a;"></div>
<div class="a" style="left:258px;top:457px;width:1295px;height:1px;background:rgba(0,0,0,0.22);"></div>
<div class="a" style="left:230px;top:457px;width:28px;height:21px;background:#b48cf2;"></div>
<div class="a" style="left:230px;top:457px;width:28px;height:1px;background:rgba(0,0,0,0.25);"></div>
<div class="a" style="left:258px;top:478px;width:1295px;height:26px;background:#3a3a3a;"></div>
<div class="a" style="left:258px;top:478px;width:1295px;height:1px;background:rgba(0,0,0,0.22);"></div>
<div class="a" style="left:230px;top:478px;width:28px;height:26px;background:#8c8c8c;"></div>
<div class="a" style="left:230px;top:478px;width:28px;height:1px;background:rgba(0,0,0,0.25);"></div>
<div class="a" style="left:258px;top:504px;width:1295px;height:26px;background:#564e6a;"></div>
<div class="a" style="left:258px;top:504px;width:1295px;height:1px;background:rgba(0,0,0,0.22);"></div>
<div class="a" style="left:230px;top:504px;width:28px;height:26px;background:#8c8c8c;"></div>
<div class="a" style="left:248px;top:504px;width:10px;height:26px;background:#b48cf2;"></div>
<div class="a" style="left:230px;top:504px;width:28px;height:1px;background:rgba(0,0,0,0.25);"></div>
<div class="a" style="left:258px;top:530px;width:1295px;height:26px;background:#3a3a3a;"></div>
<div class="a" style="left:258px;top:530px;width:1295px;height:1px;background:rgba(0,0,0,0.22);"></div>
<div class="a" style="left:230px;top:530px;width:28px;height:26px;background:#3e3e3e;"></div>
<div class="a" style="left:230px;top:530px;width:28px;height:1px;background:rgba(0,0,0,0.25);"></div>
<div class="a" style="left:258px;top:556px;width:1295px;height:26px;background:#564e6a;"></div>
<div class="a" style="left:258px;top:556px;width:1295px;height:1px;background:rgba(0,0,0,0.22);"></div>
<div class="a" style="left:230px;top:556px;width:28px;height:26px;background:#8c8c8c;"></div>
<div class="a" style="left:248px;top:556px;width:10px;height:26px;background:#b48cf2;"></div>
<div class="a" style="left:230px;top:556px;width:28px;height:1px;background:rgba(0,0,0,0.25);"></div>
<div class="a" style="left:258px;top:582px;width:1295px;height:26px;background:#564e6a;"></div>
<div class="a" style="left:258px;top:582px;width:1295px;height:1px;background:rgba(0,0,0,0.22);"></div>
<div class="a" style="left:230px;top:582px;width:28px;height:26px;background:#3e3e3e;"></div>
<div class="a" style="left:248px;top:582px;width:10px;height:26px;background:#b48cf2;"></div>
<div class="a" style="left:230px;top:582px;width:28px;height:1px;background:rgba(0,0,0,0.25);"></div>
<div class="a" style="left:258px;top:608px;width:1295px;height:27px;background:#3a3a3a;"></div>
<div class="a" style="left:258px;top:608px;width:1295px;height:1px;background:rgba(0,0,0,0.22);"></div>
<div class="a" style="left:230px;top:608px;width:28px;height:27px;background:#8c8c8c;"></div>
<div class="a" style="left:230px;top:608px;width:28px;height:1px;background:rgba(0,0,0,0.25);"></div>
<div class="a" style="left:258px;top:635px;width:1295px;height:26px;background:#564e6a;"></div>
<div class="a" style="left:258px;top:635px;width:1295px;height:1px;background:rgba(0,0,0,0.22);"></div>
<div class="a" style="left:230px;top:635px;width:28px;height:26px;background:#3e3e3e;"></div>
<div class="a" style="left:248px;top:635px;width:10px;height:26px;background:#b48cf2;"></div>
<div class="a" style="left:230px;top:635px;width:28px;height:1px;background:rgba(0,0,0,0.25);"></div>
<div class="a" style="left:258px;top:661px;width:1295px;height:26px;background:#3a3a3a;"></div>
<div class="a" style="left:258px;top:661px;width:1295px;height:1px;background:rgba(0,0,0,0.22);"></div>
<div class="a" style="left:230px;top:661px;width:28px;height:26px;background:#8c8c8c;"></div>
<div class="a" style="left:230px;top:661px;width:28px;height:1px;background:rgba(0,0,0,0.25);"></div>
<div class="a" style="left:258px;top:687px;width:1295px;height:26px;background:#564e6a;"></div>
<div class="a" style="left:258px;top:687px;width:1295px;height:1px;background:rgba(0,0,0,0.22);"></div>
<div class="a" style="left:230px;top:687px;width:28px;height:26px;background:#8c8c8c;"></div>
<div class="a" style="left:248px;top:687px;width:10px;height:26px;background:#b48cf2;"></div>
<div class="a" style="left:230px;top:687px;width:28px;height:1px;background:rgba(0,0,0,0.25);"></div>
<div class="a" style="left:258px;top:713px;width:1295px;height:26px;background:#564e6a;"></div>
<div class="a" style="left:258px;top:713px;width:1295px;height:1px;background:rgba(0,0,0,0.22);"></div>
<div class="a" style="left:230px;top:713px;width:28px;height:26px;background:#3e3e3e;"></div>
<div class="a" style="left:248px;top:713px;width:10px;height:26px;background:#b48cf2;"></div>
<div class="a" style="left:230px;top:713px;width:28px;height:1px;background:rgba(0,0,0,0.25);"></div>
<div class="a" style="left:258px;top:739px;width:1295px;height:26px;background:#3a3a3a;"></div>
<div class="a" style="left:258px;top:739px;width:1295px;height:1px;background:rgba(0,0,0,0.22);"></div>
<div class="a" style="left:230px;top:739px;width:28px;height:26px;background:#8c8c8c;"></div>
<div class="a" style="left:230px;top:739px;width:28px;height:1px;background:rgba(0,0,0,0.25);"></div>
<div class="a" style="left:258px;top:765px;width:1295px;height:26px;background:#564e6a;"></div>
<div class="a" style="left:258px;top:765px;width:1295px;height:1px;background:rgba(0,0,0,0.22);"></div>
<div class="a" style="left:230px;top:765px;width:28px;height:26px;background:#b48cf2;"></div>
<div class="a" style="left:230px;top:765px;width:28px;height:1px;background:rgba(0,0,0,0.25);"></div>
<div class="a" style="left:258px;top:791px;width:1295px;height:26px;background:#3a3a3a;"></div>
<div class="a" style="left:258px;top:791px;width:1295px;height:1px;background:rgba(0,0,0,0.22);"></div>
<div class="a" style="left:230px;top:791px;width:28px;height:26px;background:#8c8c8c;"></div>
<div class="a" style="left:230px;top:791px;width:28px;height:1px;background:rgba(0,0,0,0.25);"></div>
<div class="a" style="left:258px;top:817px;width:1295px;height:24px;background:#564e6a;"></div>
<div class="a" style="left:258px;top:817px;width:1295px;height:1px;background:rgba(0,0,0,0.22);"></div>
<div class="a" style="left:230px;top:817px;width:28px;height:24px;background:#8c8c8c;"></div>
<div class="a" style="left:248px;top:817px;width:10px;height:24px;background:#b48cf2;"></div>
<div class="a" style="left:230px;top:817px;width:28px;height:1px;background:rgba(0,0,0,0.25);"></div>
<div class="a" style="left:258px;top:457px;width:1px;height:384px;background:rgba(0,0,0,0.16);"></div>
<div class="a" style="left:279px;top:457px;width:1px;height:384px;background:rgba(0,0,0,0.03);"></div>
<div class="a" style="left:299px;top:457px;width:1px;height:384px;background:rgba(0,0,0,0.03);"></div>
<div class="a" style="left:319px;top:457px;width:1px;height:384px;background:rgba(0,0,0,0.03);"></div>
<div class="a" style="left:340px;top:457px;width:1px;height:384px;background:rgba(0,0,0,0.07);"></div>
<div class="a" style="left:360px;top:457px;width:1px;height:384px;background:rgba(0,0,0,0.03);"></div>
<div class="a" style="left:380px;top:457px;width:1px;height:384px;background:rgba(0,0,0,0.03);"></div>
<div class="a" style="left:400px;top:457px;width:1px;height:384px;background:rgba(0,0,0,0.03);"></div>
<div class="a" style="left:421px;top:457px;width:1px;height:384px;background:rgba(0,0,0,0.07);"></div>
<div class="a" style="left:441px;top:457px;width:1px;height:384px;background:rgba(0,0,0,0.03);"></div>
<div class="a" style="left:461px;top:457px;width:1px;height:384px;background:rgba(0,0,0,0.03);"></div>
<div class="a" style="left:481px;top:457px;width:1px;height:384px;background:rgba(0,0,0,0.03);"></div>
<div class="a" style="left:502px;top:457px;width:1px;height:384px;background:rgba(0,0,0,0.07);"></div>
<div class="a" style="left:522px;top:457px;width:1px;height:384px;background:rgba(0,0,0,0.03);"></div>
<div class="a" style="left:542px;top:457px;width:1px;height:384px;background:rgba(0,0,0,0.03);"></div>
<div class="a" style="left:563px;top:457px;width:1px;height:384px;background:rgba(0,0,0,0.03);"></div>
<div class="a" style="left:583px;top:457px;width:1px;height:384px;background:rgba(0,0,0,0.16);"></div>
<div class="a" style="left:603px;top:457px;width:1px;height:384px;background:rgba(0,0,0,0.03);"></div>
<div class="a" style="left:623px;top:457px;width:1px;height:384px;background:rgba(0,0,0,0.03);"></div>
<div class="a" style="left:644px;top:457px;width:1px;height:384px;background:rgba(0,0,0,0.03);"></div>
<div class="a" style="left:664px;top:457px;width:1px;height:384px;background:rgba(0,0,0,0.07);"></div>
<div class="a" style="left:684px;top:457px;width:1px;height:384px;background:rgba(0,0,0,0.03);"></div>
<div class="a" style="left:704px;top:457px;width:1px;height:384px;background:rgba(0,0,0,0.03);"></div>
<div class="a" style="left:725px;top:457px;width:1px;height:384px;background:rgba(0,0,0,0.03);"></div>
<div class="a" style="left:745px;top:457px;width:1px;height:384px;background:rgba(0,0,0,0.07);"></div>
<div class="a" style="left:765px;top:457px;width:1px;height:384px;background:rgba(0,0,0,0.03);"></div>
<div class="a" style="left:786px;top:457px;width:1px;height:384px;background:rgba(0,0,0,0.03);"></div>
<div class="a" style="left:806px;top:457px;width:1px;height:384px;background:rgba(0,0,0,0.03);"></div>
<div class="a" style="left:826px;top:457px;width:1px;height:384px;background:rgba(0,0,0,0.07);"></div>
<div class="a" style="left:846px;top:457px;width:1px;height:384px;background:rgba(0,0,0,0.03);"></div>
<div class="a" style="left:867px;top:457px;width:1px;height:384px;background:rgba(0,0,0,0.03);"></div>
<div class="a" style="left:887px;top:457px;width:1px;height:384px;background:rgba(0,0,0,0.03);"></div>
<div class="a" style="left:907px;top:457px;width:1px;height:384px;background:rgba(0,0,0,0.16);"></div>
<div class="a" style="left:927px;top:457px;width:1px;height:384px;background:rgba(0,0,0,0.03);"></div>
<div class="a" style="left:948px;top:457px;width:1px;height:384px;background:rgba(0,0,0,0.03);"></div>
<div class="a" style="left:968px;top:457px;width:1px;height:384px;background:rgba(0,0,0,0.03);"></div>
<div class="a" style="left:988px;top:457px;width:1px;height:384px;background:rgba(0,0,0,0.07);"></div>
<div class="a" style="left:1008px;top:457px;width:1px;height:384px;background:rgba(0,0,0,0.03);"></div>
<div class="a" style="left:1029px;top:457px;width:1px;height:384px;background:rgba(0,0,0,0.03);"></div>
<div class="a" style="left:1049px;top:457px;width:1px;height:384px;background:rgba(0,0,0,0.03);"></div>
<div class="a" style="left:1069px;top:457px;width:1px;height:384px;background:rgba(0,0,0,0.07);"></div>
<div class="a" style="left:1090px;top:457px;width:1px;height:384px;background:rgba(0,0,0,0.03);"></div>
<div class="a" style="left:1110px;top:457px;width:1px;height:384px;background:rgba(0,0,0,0.03);"></div>
<div class="a" style="left:1130px;top:457px;width:1px;height:384px;background:rgba(0,0,0,0.03);"></div>
<div class="a" style="left:1150px;top:457px;width:1px;height:384px;background:rgba(0,0,0,0.07);"></div>
<div class="a" style="left:1171px;top:457px;width:1px;height:384px;background:rgba(0,0,0,0.03);"></div>
<div class="a" style="left:1191px;top:457px;width:1px;height:384px;background:rgba(0,0,0,0.03);"></div>
<div class="a" style="left:1211px;top:457px;width:1px;height:384px;background:rgba(0,0,0,0.03);"></div>
<div class="a" style="left:1231px;top:457px;width:1px;height:384px;background:rgba(0,0,0,0.16);"></div>
<div class="a" style="left:1252px;top:457px;width:1px;height:384px;background:rgba(0,0,0,0.03);"></div>
<div class="a" style="left:1272px;top:457px;width:1px;height:384px;background:rgba(0,0,0,0.03);"></div>
<div class="a" style="left:1292px;top:457px;width:1px;height:384px;background:rgba(0,0,0,0.03);"></div>
<div class="a" style="left:1313px;top:457px;width:1px;height:384px;background:rgba(0,0,0,0.07);"></div>
<div class="a" style="left:1333px;top:457px;width:1px;height:384px;background:rgba(0,0,0,0.03);"></div>
<div class="a" style="left:1353px;top:457px;width:1px;height:384px;background:rgba(0,0,0,0.03);"></div>
<div class="a" style="left:1373px;top:457px;width:1px;height:384px;background:rgba(0,0,0,0.03);"></div>
<div class="a" style="left:1394px;top:457px;width:1px;height:384px;background:rgba(0,0,0,0.07);"></div>
<div class="a" style="left:1414px;top:457px;width:1px;height:384px;background:rgba(0,0,0,0.03);"></div>
<div class="a" style="left:1434px;top:457px;width:1px;height:384px;background:rgba(0,0,0,0.03);"></div>
<div class="a" style="left:1454px;top:457px;width:1px;height:384px;background:rgba(0,0,0,0.03);"></div>
<div class="a" style="left:1475px;top:457px;width:1px;height:384px;background:rgba(0,0,0,0.07);"></div>
<div class="a" style="left:1495px;top:457px;width:1px;height:384px;background:rgba(0,0,0,0.03);"></div>
<div class="a" style="left:1515px;top:457px;width:1px;height:384px;background:rgba(0,0,0,0.03);"></div>
<div class="a" style="left:1536px;top:457px;width:1px;height:384px;background:rgba(0,0,0,0.03);"></div>
<div class="a" style="left:583px;top:457px;width:324px;height:384px;background:rgba(255,255,255,0.022);"></div>
<div class="a" style="left:1231px;top:457px;width:322px;height:384px;background:rgba(255,255,255,0.022);"></div>
<div class="a t" style="left:199px;top:460px;width:30px;height:18px;line-height:18px;font-size:11.5px;color:#c8c8c8;text-align:left;font-weight:normal;">C#4</div>
<div class="a t" style="left:199px;top:773px;width:30px;height:18px;line-height:18px;font-size:11.5px;color:#c8c8c8;text-align:left;font-weight:normal;">C#3</div>
<div class="a" style="left:196px;top:478px;width:34px;height:1px;background:#2e2e2e;"></div>
<div class="a" style="left:196px;top:790px;width:34px;height:1px;background:#2e2e2e;"></div>
<div class="a" style="left:258px;top:505px;width:648px;height:25px;background:#d8d46c;border:2px solid #c6e6f4;box-sizing:border-box;"></div>
<div class="a" style="left:260px;top:507px;width:644px;height:21px;border:1px solid #1f1f10;box-sizing:border-box;"></div>
<div class="a t" style="left:261px;top:505px;width:60px;height:25px;line-height:25px;font-size:10px;color:#111;text-align:left;font-weight:normal;">B3</div>
<div class="a" style="left:258px;top:583px;width:648px;height:25px;background:#d8d46c;border:2px solid #c6e6f4;box-sizing:border-box;"></div>
<div class="a" style="left:260px;top:585px;width:644px;height:21px;border:1px solid #1f1f10;box-sizing:border-box;"></div>
<div class="a t" style="left:261px;top:583px;width:60px;height:25px;line-height:25px;font-size:10px;color:#111;text-align:left;font-weight:normal;">G#3</div>
<div class="a" style="left:258px;top:688px;width:648px;height:25px;background:#d8d46c;border:2px solid #c6e6f4;box-sizing:border-box;"></div>
<div class="a" style="left:260px;top:690px;width:644px;height:21px;border:1px solid #1f1f10;box-sizing:border-box;"></div>
<div class="a t" style="left:261px;top:688px;width:60px;height:25px;line-height:25px;font-size:10px;color:#111;text-align:left;font-weight:normal;">E3</div>
<div class="a" style="left:258px;top:766px;width:648px;height:25px;background:#d8d46c;border:2px solid #c6e6f4;box-sizing:border-box;"></div>
<div class="a" style="left:260px;top:768px;width:644px;height:21px;border:1px solid #1f1f10;box-sizing:border-box;"></div>
<div class="a t" style="left:261px;top:766px;width:60px;height:25px;line-height:25px;font-size:10px;color:#111;text-align:left;font-weight:normal;">C#3</div>
<div class="a" style="left:1231px;top:557px;width:322px;height:25px;background:#606060;"></div>
<div class="a t" style="left:1234px;top:557px;width:60px;height:25px;line-height:25px;font-size:10px;color:#111;text-align:left;font-weight:normal;">A3</div>
<div class="a" style="left:907px;top:636px;width:324px;height:25px;background:#606060;"></div>
<div class="a t" style="left:910px;top:636px;width:60px;height:25px;line-height:25px;font-size:10px;color:#111;text-align:left;font-weight:normal;">F#3</div>
<div class="a" style="left:196px;top:841px;width:1357px;height:1px;background:#262626;"></div>
<div class="a" style="left:196px;top:842px;width:1357px;height:59px;background:#383838;"></div>
<div class="a" style="left:258px;top:842px;width:1px;height:59px;background:rgba(0,0,0,0.18);"></div>
<div class="a" style="left:279px;top:842px;width:1px;height:59px;background:rgba(0,0,0,0.04);"></div>
<div class="a" style="left:299px;top:842px;width:1px;height:59px;background:rgba(0,0,0,0.04);"></div>
<div class="a" style="left:319px;top:842px;width:1px;height:59px;background:rgba(0,0,0,0.04);"></div>
<div class="a" style="left:340px;top:842px;width:1px;height:59px;background:rgba(0,0,0,0.09);"></div>
<div class="a" style="left:360px;top:842px;width:1px;height:59px;background:rgba(0,0,0,0.04);"></div>
<div class="a" style="left:380px;top:842px;width:1px;height:59px;background:rgba(0,0,0,0.04);"></div>
<div class="a" style="left:400px;top:842px;width:1px;height:59px;background:rgba(0,0,0,0.04);"></div>
<div class="a" style="left:421px;top:842px;width:1px;height:59px;background:rgba(0,0,0,0.09);"></div>
<div class="a" style="left:441px;top:842px;width:1px;height:59px;background:rgba(0,0,0,0.04);"></div>
<div class="a" style="left:461px;top:842px;width:1px;height:59px;background:rgba(0,0,0,0.04);"></div>
<div class="a" style="left:481px;top:842px;width:1px;height:59px;background:rgba(0,0,0,0.04);"></div>
<div class="a" style="left:502px;top:842px;width:1px;height:59px;background:rgba(0,0,0,0.09);"></div>
<div class="a" style="left:522px;top:842px;width:1px;height:59px;background:rgba(0,0,0,0.04);"></div>
<div class="a" style="left:542px;top:842px;width:1px;height:59px;background:rgba(0,0,0,0.04);"></div>
<div class="a" style="left:563px;top:842px;width:1px;height:59px;background:rgba(0,0,0,0.04);"></div>
<div class="a" style="left:583px;top:842px;width:1px;height:59px;background:rgba(0,0,0,0.18);"></div>
<div class="a" style="left:603px;top:842px;width:1px;height:59px;background:rgba(0,0,0,0.04);"></div>
<div class="a" style="left:623px;top:842px;width:1px;height:59px;background:rgba(0,0,0,0.04);"></div>
<div class="a" style="left:644px;top:842px;width:1px;height:59px;background:rgba(0,0,0,0.04);"></div>
<div class="a" style="left:664px;top:842px;width:1px;height:59px;background:rgba(0,0,0,0.09);"></div>
<div class="a" style="left:684px;top:842px;width:1px;height:59px;background:rgba(0,0,0,0.04);"></div>
<div class="a" style="left:704px;top:842px;width:1px;height:59px;background:rgba(0,0,0,0.04);"></div>
<div class="a" style="left:725px;top:842px;width:1px;height:59px;background:rgba(0,0,0,0.04);"></div>
<div class="a" style="left:745px;top:842px;width:1px;height:59px;background:rgba(0,0,0,0.09);"></div>
<div class="a" style="left:765px;top:842px;width:1px;height:59px;background:rgba(0,0,0,0.04);"></div>
<div class="a" style="left:786px;top:842px;width:1px;height:59px;background:rgba(0,0,0,0.04);"></div>
<div class="a" style="left:806px;top:842px;width:1px;height:59px;background:rgba(0,0,0,0.04);"></div>
<div class="a" style="left:826px;top:842px;width:1px;height:59px;background:rgba(0,0,0,0.09);"></div>
<div class="a" style="left:846px;top:842px;width:1px;height:59px;background:rgba(0,0,0,0.04);"></div>
<div class="a" style="left:867px;top:842px;width:1px;height:59px;background:rgba(0,0,0,0.04);"></div>
<div class="a" style="left:887px;top:842px;width:1px;height:59px;background:rgba(0,0,0,0.04);"></div>
<div class="a" style="left:907px;top:842px;width:1px;height:59px;background:rgba(0,0,0,0.18);"></div>
<div class="a" style="left:927px;top:842px;width:1px;height:59px;background:rgba(0,0,0,0.04);"></div>
<div class="a" style="left:948px;top:842px;width:1px;height:59px;background:rgba(0,0,0,0.04);"></div>
<div class="a" style="left:968px;top:842px;width:1px;height:59px;background:rgba(0,0,0,0.04);"></div>
<div class="a" style="left:988px;top:842px;width:1px;height:59px;background:rgba(0,0,0,0.09);"></div>
<div class="a" style="left:1008px;top:842px;width:1px;height:59px;background:rgba(0,0,0,0.04);"></div>
<div class="a" style="left:1029px;top:842px;width:1px;height:59px;background:rgba(0,0,0,0.04);"></div>
<div class="a" style="left:1049px;top:842px;width:1px;height:59px;background:rgba(0,0,0,0.04);"></div>
<div class="a" style="left:1069px;top:842px;width:1px;height:59px;background:rgba(0,0,0,0.09);"></div>
<div class="a" style="left:1090px;top:842px;width:1px;height:59px;background:rgba(0,0,0,0.04);"></div>
<div class="a" style="left:1110px;top:842px;width:1px;height:59px;background:rgba(0,0,0,0.04);"></div>
<div class="a" style="left:1130px;top:842px;width:1px;height:59px;background:rgba(0,0,0,0.04);"></div>
<div class="a" style="left:1150px;top:842px;width:1px;height:59px;background:rgba(0,0,0,0.09);"></div>
<div class="a" style="left:1171px;top:842px;width:1px;height:59px;background:rgba(0,0,0,0.04);"></div>
<div class="a" style="left:1191px;top:842px;width:1px;height:59px;background:rgba(0,0,0,0.04);"></div>
<div class="a" style="left:1211px;top:842px;width:1px;height:59px;background:rgba(0,0,0,0.04);"></div>
<div class="a" style="left:1231px;top:842px;width:1px;height:59px;background:rgba(0,0,0,0.18);"></div>
<div class="a" style="left:1252px;top:842px;width:1px;height:59px;background:rgba(0,0,0,0.04);"></div>
<div class="a" style="left:1272px;top:842px;width:1px;height:59px;background:rgba(0,0,0,0.04);"></div>
<div class="a" style="left:1292px;top:842px;width:1px;height:59px;background:rgba(0,0,0,0.04);"></div>
<div class="a" style="left:1313px;top:842px;width:1px;height:59px;background:rgba(0,0,0,0.09);"></div>
<div class="a" style="left:1333px;top:842px;width:1px;height:59px;background:rgba(0,0,0,0.04);"></div>
<div class="a" style="left:1353px;top:842px;width:1px;height:59px;background:rgba(0,0,0,0.04);"></div>
<div class="a" style="left:1373px;top:842px;width:1px;height:59px;background:rgba(0,0,0,0.04);"></div>
<div class="a" style="left:1394px;top:842px;width:1px;height:59px;background:rgba(0,0,0,0.09);"></div>
<div class="a" style="left:1414px;top:842px;width:1px;height:59px;background:rgba(0,0,0,0.04);"></div>
<div class="a" style="left:1434px;top:842px;width:1px;height:59px;background:rgba(0,0,0,0.04);"></div>
<div class="a" style="left:1454px;top:842px;width:1px;height:59px;background:rgba(0,0,0,0.04);"></div>
<div class="a" style="left:1475px;top:842px;width:1px;height:59px;background:rgba(0,0,0,0.09);"></div>
<div class="a" style="left:1495px;top:842px;width:1px;height:59px;background:rgba(0,0,0,0.04);"></div>
<div class="a" style="left:1515px;top:842px;width:1px;height:59px;background:rgba(0,0,0,0.04);"></div>
<div class="a" style="left:1536px;top:842px;width:1px;height:59px;background:rgba(0,0,0,0.04);"></div>
<div class="a" style="left:583px;top:842px;width:324px;height:59px;background:rgba(255,255,255,0.022);"></div>
<div class="a" style="left:1231px;top:842px;width:322px;height:59px;background:rgba(255,255,255,0.022);"></div>
<div class="a" style="left:196px;top:842px;width:62px;height:59px;background:#383838;"></div>
<svg class="a" style="left:200px;top:845px;" width="9" height="12" viewBox="0 0 9 12"><path d="M1 11 V8 M3.5 11 V6 M6 11 V3 M8.5 11 V1" stroke="#8a8a8a" stroke-width="1.2"/></svg>
<div class="a t" style="left:212px;top:842px;width:36px;height:14px;line-height:14px;font-size:11.5px;color:#b0b0b0;text-align:right;font-weight:normal;">127</div>
<div class="a t" style="left:212px;top:865px;width:36px;height:14px;line-height:14px;font-size:11.5px;color:#b0b0b0;text-align:right;font-weight:normal;">64</div>
<div class="a t" style="left:212px;top:888px;width:36px;height:14px;line-height:14px;font-size:11.5px;color:#b0b0b0;text-align:right;font-weight:normal;">1</div>
<div class="a" style="left:257px;top:846px;width:1px;height:55px;background:#8a8a8a;"></div>
<div class="a" style="left:252px;top:846px;width:5px;height:1px;background:#8a8a8a;"></div>
<div class="a" style="left:252px;top:858px;width:5px;height:1px;background:#8a8a8a;"></div>
<div class="a" style="left:252px;top:872px;width:5px;height:1px;background:#8a8a8a;"></div>
<div class="a" style="left:252px;top:885px;width:5px;height:1px;background:#8a8a8a;"></div>
<div class="a" style="left:252px;top:898px;width:5px;height:1px;background:#8a8a8a;"></div>
<div class="a" style="left:261px;top:856px;width:646px;height:2px;background:#bfe4f4;"></div>
<svg class="a" style="left:256px;top:852px;" width="10" height="10" viewBox="0 0 10 10"><circle cx="5" cy="5" r="3.5" fill="#bfe4f4"/></svg>
<div class="a" style="left:909px;top:856px;width:322px;height:1px;background:#111;"></div>
<div class="a" style="left:1234px;top:853px;width:319px;height:1px;background:#111;"></div>
<svg class="a" style="left:904px;top:852px;" width="10" height="10" viewBox="0 0 10 10"><circle cx="5" cy="5" r="3" fill="none" stroke="#111" stroke-width="1.2"/></svg>
<svg class="a" style="left:1229px;top:849px;" width="10" height="10" viewBox="0 0 10 10"><circle cx="5" cy="5" r="3" fill="none" stroke="#111" stroke-width="1.2"/></svg>
<div class="a" style="left:196px;top:901px;width:1357px;height:1px;background:#2a2a2a;"></div>
<div class="a" style="left:196px;top:902px;width:1357px;height:19px;background:#363636;"></div>
<div class="a" style="left:200px;top:905px;width:12px;height:13px;background:#f8a64c;"></div>
<svg class="a" style="left:201px;top:907px;" width="10" height="9" viewBox="0 0 10 9"><path d="M1 4.5 H8" stroke="#1a1a1a" stroke-width="1.6"/><rect x="1" y="2.5" width="3" height="4" fill="#1a1a1a"/></svg>
<svg class="a" style="left:215px;top:908px;" width="9" height="8" viewBox="0 0 9 8"><path d="M1 1 L8 1 L4.5 7 Z" fill="#c8c8c8"/></svg>
<div class="a" style="left:227px;top:904px;width:1px;height:16px;background:#2a2a2a;"></div>
<div class="a t" style="left:231px;top:904px;width:50px;height:15px;line-height:15px;font-size:11.5px;color:#c8c8c8;text-align:left;font-weight:normal;">Velocity</div>
<div class="a" style="left:278px;top:904px;width:69px;height:15px;background:#1f1f1f;border-radius:7px;"></div>
<div class="a t" style="left:278px;top:904px;width:69px;height:15px;line-height:15px;font-size:11.5px;color:#d0d0d0;text-align:center;font-weight:normal;">Randomize</div>
<div class="a" style="left:353px;top:904px;width:40px;height:15px;background:#232323;"></div>
<div class="a" style="left:353px;top:904px;width:31px;height:15px;background:#176d7f;"></div>
<div class="a t" style="left:353px;top:904px;width:40px;height:15px;line-height:15px;font-size:11.5px;color:#d0e4ea;text-align:center;font-weight:normal;">100</div>
<div class="a" style="left:398px;top:904px;width:1px;height:16px;background:#2a2a2a;"></div>
<div class="a t" style="left:405px;top:904px;width:40px;height:15px;line-height:15px;font-size:11.5px;color:#c8c8c8;text-align:left;font-weight:normal;">Ramp</div>
<div class="a" style="left:439px;top:904px;width:41px;height:15px;background:#232323;"></div>
<div class="a" style="left:439px;top:904px;width:31px;height:15px;background:#176d7f;"></div>
<div class="a t" style="left:439px;top:904px;width:41px;height:15px;line-height:15px;font-size:11.5px;color:#d0e4ea;text-align:center;font-weight:normal;">100</div>
<div class="a" style="left:484px;top:904px;width:41px;height:15px;background:#232323;"></div>
<div class="a" style="left:484px;top:904px;width:41px;height:15px;background:#176d7f;"></div>
<div class="a t" style="left:484px;top:904px;width:41px;height:15px;line-height:15px;font-size:11.5px;color:#d0e4ea;text-align:center;font-weight:normal;">127</div>
<div class="a" style="left:530px;top:904px;width:1px;height:16px;background:#2a2a2a;"></div>
<div class="a t" style="left:537px;top:904px;width:60px;height:15px;line-height:15px;font-size:11.5px;color:#c8c8c8;text-align:left;font-weight:normal;">Deviation</div>
<div class="a" style="left:592px;top:904px;width:63px;height:15px;background:#232323;"></div>
<div class="a t" style="left:592px;top:904px;width:63px;height:15px;line-height:15px;font-size:11.5px;color:#d0e4ea;text-align:center;font-weight:normal;">0</div>
<div class="a" style="left:1553px;top:376px;width:11px;height:545px;background:#2a2a2a;"></div>
<div class="a" style="left:0px;top:921px;width:1564px;height:39px;background:#2a2a2a;"></div>
<svg class="a" style="left:12px;top:932px;" width="17" height="17" viewBox="0 0 17 17"><circle cx="8.5" cy="8.5" r="8" fill="#4a4a4a"/><rect x="7.5" y="4" width="2" height="9" fill="#2a2a2a"/></svg>
<div class="a" style="left:46px;top:931px;width:1045px;height:20px;background:#333333;border-radius:3px;"></div>
<div class="a" style="left:1102px;top:930px;width:21px;height:21px;background:#f8a64c;border-radius:3px;"></div>
<svg class="a" style="left:1107px;top:935px;" width="11" height="10" viewBox="0 0 11 10"><path d="M5.5 1 L10 9 L1 9 Z" fill="#1a1a1a"/></svg>
<div class="a" style="left:1125px;top:929px;width:216px;height:24px;background:#434343;border:2px solid #9a9a9a;box-sizing:border-box;"></div>
<div class="a" style="left:1127px;top:935px;width:105px;height:1px;background:#222;"></div>
<div class="a" style="left:1127px;top:938px;width:105px;height:1px;background:#222;"></div>
<div class="a" style="left:1127px;top:942px;width:105px;height:1px;background:#222;"></div>
<div class="a" style="left:1127px;top:946px;width:105px;height:1px;background:#222;"></div>
<div class="a" style="left:1232px;top:940px;width:56px;height:1px;background:#2a2a2a;"></div>
<div class="a" style="left:1288px;top:937px;width:51px;height:1px;background:#2a2a2a;"></div>
<div class="a" style="left:1352px;top:930px;width:19px;height:21px;background:#343434;"></div>
<svg class="a" style="left:1357px;top:935px;" width="10" height="11" viewBox="0 0 10 11"><path d="M1 1 L9 5.5 L1 10 Z" fill="#c8c8c8"/></svg>
<div class="a" style="left:1372px;top:930px;width:39px;height:21px;background:#343434;"></div>
<div class="a t" style="left:1372px;top:930px;width:39px;height:21px;line-height:21px;font-size:11.5px;color:#c8c8c8;text-align:center;font-weight:bold;">Keys</div>
<svg class="a" style="left:1413px;top:930px;" width="91" height="22" viewBox="0 0 91 22"><rect x="0" y="0" width="91" height="22" fill="#1c1f22"/><rect x="2" y="1" width="15" height="20" fill="#26313a"/><rect x="3" y="7" width="5" height="2" fill="#c08a50"/><rect x="9" y="7" width="5" height="2" fill="#c08a50"/><rect x="3" y="13" width="3" height="3" fill="#8a6a40"/><rect x="17" y="2" width="30" height="19" fill="#231c18"/><path d="M19 20 Q30 4 46 6" stroke="#5a3a28" stroke-width="1.2" fill="none"/><circle cx="30" cy="17" r="1" fill="#c8c8c8"/><rect x="47" y="1" width="14" height="20" fill="#26313a"/><rect x="48" y="15" width="8" height="2" fill="#d09050"/><rect x="61" y="2" width="29" height="19" fill="#16191c"/><path d="M63 14 H88 M63 18 H88" stroke="#3a3f44" stroke-width="0.8"/><rect x="63" y="3" width="20" height="2" fill="#3a3030"/></svg>
<svg class="a" style="left:1520px;top:933px;" width="20" height="16" viewBox="0 0 20 16"><path d="M2 15 V8 M6 15 V5 M10 15 V2 M14 15 V6" stroke="#4a4a4a" stroke-width="1.6"/></svg>
<svg class="a" style="left:1545px;top:938px;" width="8" height="6" viewBox="0 0 8 6"><path d="M1 1 L7 1 L4 5 Z" fill="#4a4a4a"/></svg>
</body></html>
